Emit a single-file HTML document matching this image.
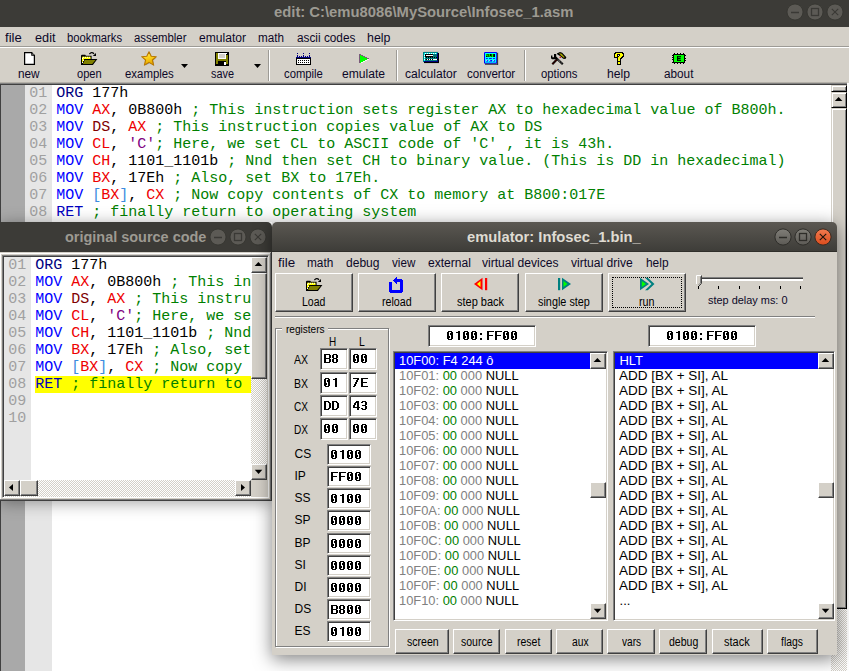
<!DOCTYPE html>
<html><head><meta charset="utf-8"><style>
html,body{margin:0;padding:0;}
body{width:849px;height:671px;overflow:hidden;position:relative;background:#fff;font-family:"Liberation Sans",sans-serif;}
.a{position:absolute;}
.t{position:absolute;white-space:pre;transform-origin:0 0;}
</style></head><body>
<div class="a" style="left:0px;top:0px;width:849px;height:27px;background:#3c3b37;"></div>
<div class="t" style="left:273.50px;top:4.75px;font-family:'Liberation Sans', sans-serif;font-size:14px;line-height:14px;color:#9d9a92;font-weight:bold;transform:scaleX(1.0574);">edit: C:\emu8086\MySource\Infosec_1.asm</div>
<svg class="a" style="left:785px;top:2px" width="20" height="20"><circle cx="10" cy="10" r="8" fill="#5c5a55" stroke="#34332f" stroke-width="0.8"/><line x1="6" y1="10.5" x2="14" y2="10.5" stroke="#3a3935" stroke-width="1.5"/></svg>
<svg class="a" style="left:805px;top:2px" width="20" height="20"><circle cx="10" cy="10" r="8" fill="#5c5a55" stroke="#34332f" stroke-width="0.8"/><rect x="6.5" y="6.5" width="7" height="7" fill="none" stroke="#3a3935" stroke-width="1.3"/></svg>
<svg class="a" style="left:825px;top:2px" width="20" height="20"><circle cx="10" cy="10" r="8" fill="#5c5a55" stroke="#34332f" stroke-width="0.8"/><path d="M6.8 6.8 L13.2 13.2 M13.2 6.8 L6.8 13.2" stroke="#3a3935" stroke-width="1.1"/></svg>
<div class="a" style="left:0px;top:27px;width:849px;height:19px;background:#d4d0c8;"></div>
<div class="a" style="left:0px;top:46px;width:849px;height:1px;background:#9d9b96;"></div>
<div class="a" style="left:0px;top:47px;width:849px;height:1px;background:#fff;"></div>
<div class="t" style="left:5.00px;top:31.84px;font-family:'Liberation Sans', sans-serif;font-size:12px;line-height:12px;color:#0c0828;transform:scaleX(1.0884);">file</div>
<div class="t" style="left:34.50px;top:31.84px;font-family:'Liberation Sans', sans-serif;font-size:12px;line-height:12px;color:#0c0828;transform:scaleX(1.0589);">edit</div>
<div class="t" style="left:67.40px;top:31.84px;font-family:'Liberation Sans', sans-serif;font-size:12px;line-height:12px;color:#0c0828;transform:scaleX(0.9372);">bookmarks</div>
<div class="t" style="left:134.30px;top:31.84px;font-family:'Liberation Sans', sans-serif;font-size:12px;line-height:12px;color:#0c0828;transform:scaleX(0.9483);">assembler</div>
<div class="t" style="left:199.00px;top:31.84px;font-family:'Liberation Sans', sans-serif;font-size:12px;line-height:12px;color:#0c0828;transform:scaleX(1.0067);">emulator</div>
<div class="t" style="left:258.30px;top:31.84px;font-family:'Liberation Sans', sans-serif;font-size:12px;line-height:12px;color:#0c0828;transform:scaleX(0.9742);">math</div>
<div class="t" style="left:297.00px;top:31.84px;font-family:'Liberation Sans', sans-serif;font-size:12px;line-height:12px;color:#0c0828;transform:scaleX(0.9836);">ascii codes</div>
<div class="t" style="left:367.00px;top:31.84px;font-family:'Liberation Sans', sans-serif;font-size:12px;line-height:12px;color:#0c0828;transform:scaleX(1.0314);">help</div>
<div class="a" style="left:0px;top:48px;width:849px;height:35px;background:#d4d0c8;"></div>
<div class="t" style="left:18.40px;top:67.54px;font-family:'Liberation Sans', sans-serif;font-size:12px;line-height:12px;color:#0c0828;transform:scaleX(0.9811);">new</div>
<div class="t" style="left:76.50px;top:67.54px;font-family:'Liberation Sans', sans-serif;font-size:12px;line-height:12px;color:#0c0828;transform:scaleX(0.9250);">open</div>
<div class="t" style="left:124.70px;top:67.54px;font-family:'Liberation Sans', sans-serif;font-size:12px;line-height:12px;color:#0c0828;transform:scaleX(0.9502);">examples</div>
<div class="t" style="left:210.60px;top:67.54px;font-family:'Liberation Sans', sans-serif;font-size:12px;line-height:12px;color:#0c0828;transform:scaleX(0.9070);">save</div>
<div class="t" style="left:283.50px;top:67.54px;font-family:'Liberation Sans', sans-serif;font-size:12px;line-height:12px;color:#0c0828;transform:scaleX(0.9405);">compile</div>
<div class="t" style="left:341.50px;top:67.54px;font-family:'Liberation Sans', sans-serif;font-size:12px;line-height:12px;color:#0c0828;transform:scaleX(1.0093);">emulate</div>
<div class="t" style="left:405.00px;top:67.54px;font-family:'Liberation Sans', sans-serif;font-size:12px;line-height:12px;color:#0c0828;transform:scaleX(1.0086);">calculator</div>
<div class="t" style="left:466.90px;top:67.54px;font-family:'Liberation Sans', sans-serif;font-size:12px;line-height:12px;color:#0c0828;transform:scaleX(0.9634);">convertor</div>
<div class="t" style="left:540.70px;top:67.54px;font-family:'Liberation Sans', sans-serif;font-size:12px;line-height:12px;color:#0c0828;transform:scaleX(0.9431);">options</div>
<div class="t" style="left:607.00px;top:67.54px;font-family:'Liberation Sans', sans-serif;font-size:12px;line-height:12px;color:#0c0828;transform:scaleX(1.0138);">help</div>
<div class="t" style="left:664.40px;top:67.54px;font-family:'Liberation Sans', sans-serif;font-size:12px;line-height:12px;color:#0c0828;transform:scaleX(0.9790);">about</div>
<div class="a" style="left:268px;top:50px;width:1px;height:31px;background:#9d9b96;"></div>
<div class="a" style="left:269px;top:50px;width:1px;height:31px;background:#fff;"></div>
<div class="a" style="left:396px;top:50px;width:1px;height:31px;background:#9d9b96;"></div>
<div class="a" style="left:397px;top:50px;width:1px;height:31px;background:#fff;"></div>
<div class="a" style="left:524px;top:50px;width:1px;height:31px;background:#9d9b96;"></div>
<div class="a" style="left:525px;top:50px;width:1px;height:31px;background:#fff;"></div>
<svg class="a" style="left:181px;top:64px;shape-rendering:auto" width="7" height="4" viewBox="0 0 7 4" shape-rendering="crispEdges"><polygon points="0,0 7,0 3.5,4" fill="#000"/></svg>
<svg class="a" style="left:254px;top:64px;shape-rendering:auto" width="7" height="4" viewBox="0 0 7 4" shape-rendering="crispEdges"><polygon points="0,0 7,0 3.5,4" fill="#000"/></svg>
<div class="a" style="left:0px;top:82px;width:847px;height:1px;background:#b4b0a8;"></div>
<div class="a" style="left:0px;top:83px;width:847px;height:1px;background:#808080;"></div>
<div class="a" style="left:0px;top:84px;width:847px;height:1px;background:#404040;"></div>
<div class="a" style="left:0px;top:85px;width:1px;height:586px;background:#404040;"></div>
<div class="a" style="left:1px;top:85px;width:24px;height:586px;background:#a9a9a9;"></div>
<div class="a" style="left:25px;top:85px;width:27px;height:586px;background:#e6e6e6;"></div>
<div class="a" style="left:831px;top:85px;width:15px;height:586px;background:#d4d0c8;"></div>
<div class="a" style="left:846px;top:84px;width:1px;height:587px;background:#404040;"></div>
<div class="a" style="left:847px;top:83px;width:2px;height:588px;background:#fff;"></div>
<div class="a" style="left:831px;top:85px;width:16px;height:7px;background:#d4d0c8;border-style:solid;border-width:1px;border-color:#d4d0c8 #000 #000 #d4d0c8;box-shadow:inset 1px 1px #fff, inset -1px -1px #808080;box-sizing:border-box;"></div>
<div class="a" style="left:831px;top:92px;width:16px;height:16px;background:#d4d0c8;border-style:solid;border-width:1px;border-color:#d4d0c8 #000 #000 #d4d0c8;box-shadow:inset 1px 1px #fff, inset -1px -1px #808080;box-sizing:border-box;"></div>
<svg class="a" style="left:831px;top:92px;shape-rendering:auto" width="16" height="16" viewBox="0 0 16 16" shape-rendering="crispEdges"><polygon points="3.8,9 11.4,9 7.6,5.1" fill="#000"/></svg>
<div class="a" style="left:831px;top:108px;width:16px;height:501px;background:#d4d0c8;border-style:solid;border-width:1px;border-color:#d4d0c8 #000 #000 #d4d0c8;box-shadow:inset 1px 1px #fff, inset -1px -1px #808080;box-sizing:border-box;"></div>
<div class="a" style="left:831px;top:609px;width:16px;height:62px;background-color:#fff;background-image:linear-gradient(45deg,#d4d0c8 25%,transparent 25%,transparent 75%,#d4d0c8 75%),linear-gradient(45deg,#d4d0c8 25%,transparent 25%,transparent 75%,#d4d0c8 75%);background-size:2px 2px;background-position:0 0,1px 1px;"></div>
<div class="t" style="left:29.30px;top:85.51px;font-family:'Liberation Mono', monospace;font-size:15px;line-height:15px;color:#a0a0a0;">01</div>
<div class="t" style="left:56.30px;top:85.51px;font-family:'Liberation Mono', monospace;font-size:15px;line-height:15px;color:#000080;">ORG</div>
<div class="t" style="left:92.30px;top:85.51px;font-family:'Liberation Mono', monospace;font-size:15px;line-height:15px;color:#000;">177h</div>
<div class="t" style="left:29.30px;top:102.51px;font-family:'Liberation Mono', monospace;font-size:15px;line-height:15px;color:#a0a0a0;">02</div>
<div class="t" style="left:56.30px;top:102.51px;font-family:'Liberation Mono', monospace;font-size:15px;line-height:15px;color:#0000ff;">MOV</div>
<div class="t" style="left:92.30px;top:102.51px;font-family:'Liberation Mono', monospace;font-size:15px;line-height:15px;color:#ee0000;">AX</div>
<div class="t" style="left:110.30px;top:102.51px;font-family:'Liberation Mono', monospace;font-size:15px;line-height:15px;color:#000;">, 0B800h </div>
<div class="t" style="left:191.30px;top:102.51px;font-family:'Liberation Mono', monospace;font-size:15px;line-height:15px;color:#008000;">; This instruction sets register AX to hexadecimal value of B800h.</div>
<div class="t" style="left:29.30px;top:119.51px;font-family:'Liberation Mono', monospace;font-size:15px;line-height:15px;color:#a0a0a0;">03</div>
<div class="t" style="left:56.30px;top:119.51px;font-family:'Liberation Mono', monospace;font-size:15px;line-height:15px;color:#0000ff;">MOV</div>
<div class="t" style="left:92.30px;top:119.51px;font-family:'Liberation Mono', monospace;font-size:15px;line-height:15px;color:#800000;">DS</div>
<div class="t" style="left:110.30px;top:119.51px;font-family:'Liberation Mono', monospace;font-size:15px;line-height:15px;color:#000;">, </div>
<div class="t" style="left:128.30px;top:119.51px;font-family:'Liberation Mono', monospace;font-size:15px;line-height:15px;color:#ee0000;">AX</div>
<div class="t" style="left:155.30px;top:119.51px;font-family:'Liberation Mono', monospace;font-size:15px;line-height:15px;color:#008000;">; This instruction copies value of AX to DS</div>
<div class="t" style="left:29.30px;top:136.51px;font-family:'Liberation Mono', monospace;font-size:15px;line-height:15px;color:#a0a0a0;">04</div>
<div class="t" style="left:56.30px;top:136.51px;font-family:'Liberation Mono', monospace;font-size:15px;line-height:15px;color:#0000ff;">MOV</div>
<div class="t" style="left:92.30px;top:136.51px;font-family:'Liberation Mono', monospace;font-size:15px;line-height:15px;color:#ee0000;">CL</div>
<div class="t" style="left:110.30px;top:136.51px;font-family:'Liberation Mono', monospace;font-size:15px;line-height:15px;color:#000;">, </div>
<div class="t" style="left:128.30px;top:136.51px;font-family:'Liberation Mono', monospace;font-size:15px;line-height:15px;color:#800080;">&#x27;C&#x27;</div>
<div class="t" style="left:155.30px;top:136.51px;font-family:'Liberation Mono', monospace;font-size:15px;line-height:15px;color:#008000;">; Here, we set CL to ASCII code of &#x27;C&#x27; , it is 43h.</div>
<div class="t" style="left:29.30px;top:153.51px;font-family:'Liberation Mono', monospace;font-size:15px;line-height:15px;color:#a0a0a0;">05</div>
<div class="t" style="left:56.30px;top:153.51px;font-family:'Liberation Mono', monospace;font-size:15px;line-height:15px;color:#0000ff;">MOV</div>
<div class="t" style="left:92.30px;top:153.51px;font-family:'Liberation Mono', monospace;font-size:15px;line-height:15px;color:#ee0000;">CH</div>
<div class="t" style="left:110.30px;top:153.51px;font-family:'Liberation Mono', monospace;font-size:15px;line-height:15px;color:#000;">, 1101_1101b </div>
<div class="t" style="left:227.30px;top:153.51px;font-family:'Liberation Mono', monospace;font-size:15px;line-height:15px;color:#008000;">; Nnd then set CH to binary value. (This is DD in hexadecimal)</div>
<div class="t" style="left:29.30px;top:170.51px;font-family:'Liberation Mono', monospace;font-size:15px;line-height:15px;color:#a0a0a0;">06</div>
<div class="t" style="left:56.30px;top:170.51px;font-family:'Liberation Mono', monospace;font-size:15px;line-height:15px;color:#0000ff;">MOV</div>
<div class="t" style="left:92.30px;top:170.51px;font-family:'Liberation Mono', monospace;font-size:15px;line-height:15px;color:#ee0000;">BX</div>
<div class="t" style="left:110.30px;top:170.51px;font-family:'Liberation Mono', monospace;font-size:15px;line-height:15px;color:#000;">, 17Eh </div>
<div class="t" style="left:173.30px;top:170.51px;font-family:'Liberation Mono', monospace;font-size:15px;line-height:15px;color:#008000;">; Also, set BX to 17Eh.</div>
<div class="t" style="left:29.30px;top:187.51px;font-family:'Liberation Mono', monospace;font-size:15px;line-height:15px;color:#a0a0a0;">07</div>
<div class="t" style="left:56.30px;top:187.51px;font-family:'Liberation Mono', monospace;font-size:15px;line-height:15px;color:#0000ff;">MOV</div>
<div class="t" style="left:92.30px;top:187.51px;font-family:'Liberation Mono', monospace;font-size:15px;line-height:15px;color:#3c8ce0;">[</div>
<div class="t" style="left:101.30px;top:187.51px;font-family:'Liberation Mono', monospace;font-size:15px;line-height:15px;color:#ee0000;">BX</div>
<div class="t" style="left:119.30px;top:187.51px;font-family:'Liberation Mono', monospace;font-size:15px;line-height:15px;color:#3c8ce0;">]</div>
<div class="t" style="left:128.30px;top:187.51px;font-family:'Liberation Mono', monospace;font-size:15px;line-height:15px;color:#000;">, </div>
<div class="t" style="left:146.30px;top:187.51px;font-family:'Liberation Mono', monospace;font-size:15px;line-height:15px;color:#ee0000;">CX</div>
<div class="t" style="left:173.30px;top:187.51px;font-family:'Liberation Mono', monospace;font-size:15px;line-height:15px;color:#008000;">; Now copy contents of CX to memory at B800:017E</div>
<div class="t" style="left:29.30px;top:204.51px;font-family:'Liberation Mono', monospace;font-size:15px;line-height:15px;color:#a0a0a0;">08</div>
<div class="t" style="left:56.30px;top:204.51px;font-family:'Liberation Mono', monospace;font-size:15px;line-height:15px;color:#0000c0;">RET</div>
<div class="t" style="left:92.30px;top:204.51px;font-family:'Liberation Mono', monospace;font-size:15px;line-height:15px;color:#008000;">; finally return to operating system</div>
<div class="a" style="left:0px;top:222px;width:272px;height:279px;box-shadow:0 2px 15px rgba(0,0,0,0.36);background:transparent;"></div>
<div class="a" style="left:0px;top:222px;width:272px;height:30px;background:#3c3b37;border-top-right-radius:5px;"></div>
<div class="t" style="left:64.60px;top:229.65px;font-family:'Liberation Sans', sans-serif;font-size:14px;line-height:14px;color:#9d9a92;font-weight:bold;transform:scaleX(1.0326);">original source code</div>
<svg class="a" style="left:208px;top:227px" width="20" height="20"><circle cx="10" cy="10" r="8" fill="#5c5a55" stroke="#34332f" stroke-width="0.8"/><line x1="6" y1="10.5" x2="14" y2="10.5" stroke="#3a3935" stroke-width="1.5"/></svg>
<svg class="a" style="left:228px;top:227px" width="20" height="20"><circle cx="10" cy="10" r="8" fill="#5c5a55" stroke="#34332f" stroke-width="0.8"/><rect x="6.5" y="6.5" width="7" height="7" fill="none" stroke="#3a3935" stroke-width="1.3"/></svg>
<svg class="a" style="left:248px;top:227px" width="20" height="20"><circle cx="10" cy="10" r="8" fill="#5c5a55" stroke="#34332f" stroke-width="0.8"/><path d="M6.8 6.8 L13.2 13.2 M13.2 6.8 L6.8 13.2" stroke="#3a3935" stroke-width="1.1"/></svg>
<div class="a" style="left:0px;top:252px;width:272px;height:249px;background:#d4d0c8;"></div>
<div class="a" style="left:0px;top:253px;width:270px;height:1px;background:#fff;"></div>
<div class="a" style="left:0px;top:253px;width:1px;height:246px;background:#fff;"></div>
<div class="a" style="left:0px;top:499px;width:271px;height:1px;background:#808080;"></div>
<div class="a" style="left:270px;top:253px;width:1px;height:247px;background:#808080;"></div>
<div class="a" style="left:0px;top:500px;width:272px;height:1px;background:#404040;"></div>
<div class="a" style="left:271px;top:252px;width:1px;height:249px;background:#404040;"></div>
<div class="a" style="left:2px;top:255px;width:267px;height:243px;background:#fff;border-style:solid;border-width:1px;border-color:#808080 #fff #fff #808080;box-shadow:inset 1px 1px #404040, inset -1px -1px #d4d0c8;box-sizing:border-box;"></div>
<div class="a" style="left:4px;top:257px;width:27px;height:223px;background:#e6e6e6;"></div>
<div class="t" style="left:8.30px;top:257.51px;font-family:'Liberation Mono', monospace;font-size:15px;line-height:15px;color:#a0a0a0;">01</div>
<div class="t" style="left:8.30px;top:274.51px;font-family:'Liberation Mono', monospace;font-size:15px;line-height:15px;color:#a0a0a0;">02</div>
<div class="t" style="left:8.30px;top:291.51px;font-family:'Liberation Mono', monospace;font-size:15px;line-height:15px;color:#a0a0a0;">03</div>
<div class="t" style="left:8.30px;top:308.51px;font-family:'Liberation Mono', monospace;font-size:15px;line-height:15px;color:#a0a0a0;">04</div>
<div class="t" style="left:8.30px;top:325.51px;font-family:'Liberation Mono', monospace;font-size:15px;line-height:15px;color:#a0a0a0;">05</div>
<div class="t" style="left:8.30px;top:342.51px;font-family:'Liberation Mono', monospace;font-size:15px;line-height:15px;color:#a0a0a0;">06</div>
<div class="t" style="left:8.30px;top:359.51px;font-family:'Liberation Mono', monospace;font-size:15px;line-height:15px;color:#a0a0a0;">07</div>
<div class="t" style="left:8.30px;top:376.51px;font-family:'Liberation Mono', monospace;font-size:15px;line-height:15px;color:#a0a0a0;">08</div>
<div class="t" style="left:8.30px;top:393.51px;font-family:'Liberation Mono', monospace;font-size:15px;line-height:15px;color:#a0a0a0;">09</div>
<div class="t" style="left:8.30px;top:410.51px;font-family:'Liberation Mono', monospace;font-size:15px;line-height:15px;color:#a0a0a0;">10</div>
<div class="a" style="left:35px;top:376px;width:216px;height:17px;background:#ffff00;"></div>
<div class="a" style="left:31px;top:257px;width:220px;height:223px;overflow:hidden">
<div class="t" style="left:4.30px;top:0.51px;font-family:'Liberation Mono', monospace;font-size:15px;line-height:15px;color:#000080;">ORG</div>
<div class="t" style="left:40.30px;top:0.51px;font-family:'Liberation Mono', monospace;font-size:15px;line-height:15px;color:#000;">177h</div>
<div class="t" style="left:4.30px;top:17.51px;font-family:'Liberation Mono', monospace;font-size:15px;line-height:15px;color:#0000ff;">MOV</div>
<div class="t" style="left:40.30px;top:17.51px;font-family:'Liberation Mono', monospace;font-size:15px;line-height:15px;color:#ee0000;">AX</div>
<div class="t" style="left:58.30px;top:17.51px;font-family:'Liberation Mono', monospace;font-size:15px;line-height:15px;color:#000;">, 0B800h </div>
<div class="t" style="left:139.30px;top:17.51px;font-family:'Liberation Mono', monospace;font-size:15px;line-height:15px;color:#008000;">; This instruction sets register AX to hexadecimal value of B800h.</div>
<div class="t" style="left:4.30px;top:34.51px;font-family:'Liberation Mono', monospace;font-size:15px;line-height:15px;color:#0000ff;">MOV</div>
<div class="t" style="left:40.30px;top:34.51px;font-family:'Liberation Mono', monospace;font-size:15px;line-height:15px;color:#800000;">DS</div>
<div class="t" style="left:58.30px;top:34.51px;font-family:'Liberation Mono', monospace;font-size:15px;line-height:15px;color:#000;">, </div>
<div class="t" style="left:76.30px;top:34.51px;font-family:'Liberation Mono', monospace;font-size:15px;line-height:15px;color:#ee0000;">AX</div>
<div class="t" style="left:103.30px;top:34.51px;font-family:'Liberation Mono', monospace;font-size:15px;line-height:15px;color:#008000;">; This instruction copies value of AX to DS</div>
<div class="t" style="left:4.30px;top:51.51px;font-family:'Liberation Mono', monospace;font-size:15px;line-height:15px;color:#0000ff;">MOV</div>
<div class="t" style="left:40.30px;top:51.51px;font-family:'Liberation Mono', monospace;font-size:15px;line-height:15px;color:#ee0000;">CL</div>
<div class="t" style="left:58.30px;top:51.51px;font-family:'Liberation Mono', monospace;font-size:15px;line-height:15px;color:#000;">, </div>
<div class="t" style="left:76.30px;top:51.51px;font-family:'Liberation Mono', monospace;font-size:15px;line-height:15px;color:#800080;">&#x27;C&#x27;</div>
<div class="t" style="left:103.30px;top:51.51px;font-family:'Liberation Mono', monospace;font-size:15px;line-height:15px;color:#008000;">; Here, we set CL to ASCII code of &#x27;C&#x27; , it is 43h.</div>
<div class="t" style="left:4.30px;top:68.51px;font-family:'Liberation Mono', monospace;font-size:15px;line-height:15px;color:#0000ff;">MOV</div>
<div class="t" style="left:40.30px;top:68.51px;font-family:'Liberation Mono', monospace;font-size:15px;line-height:15px;color:#ee0000;">CH</div>
<div class="t" style="left:58.30px;top:68.51px;font-family:'Liberation Mono', monospace;font-size:15px;line-height:15px;color:#000;">, 1101_1101b </div>
<div class="t" style="left:175.30px;top:68.51px;font-family:'Liberation Mono', monospace;font-size:15px;line-height:15px;color:#008000;">; Nnd then set CH to binary value. (This is DD in hexadecimal)</div>
<div class="t" style="left:4.30px;top:85.51px;font-family:'Liberation Mono', monospace;font-size:15px;line-height:15px;color:#0000ff;">MOV</div>
<div class="t" style="left:40.30px;top:85.51px;font-family:'Liberation Mono', monospace;font-size:15px;line-height:15px;color:#ee0000;">BX</div>
<div class="t" style="left:58.30px;top:85.51px;font-family:'Liberation Mono', monospace;font-size:15px;line-height:15px;color:#000;">, 17Eh </div>
<div class="t" style="left:121.30px;top:85.51px;font-family:'Liberation Mono', monospace;font-size:15px;line-height:15px;color:#008000;">; Also, set BX to 17Eh.</div>
<div class="t" style="left:4.30px;top:102.51px;font-family:'Liberation Mono', monospace;font-size:15px;line-height:15px;color:#0000ff;">MOV</div>
<div class="t" style="left:40.30px;top:102.51px;font-family:'Liberation Mono', monospace;font-size:15px;line-height:15px;color:#3c8ce0;">[</div>
<div class="t" style="left:49.30px;top:102.51px;font-family:'Liberation Mono', monospace;font-size:15px;line-height:15px;color:#ee0000;">BX</div>
<div class="t" style="left:67.30px;top:102.51px;font-family:'Liberation Mono', monospace;font-size:15px;line-height:15px;color:#3c8ce0;">]</div>
<div class="t" style="left:76.30px;top:102.51px;font-family:'Liberation Mono', monospace;font-size:15px;line-height:15px;color:#000;">, </div>
<div class="t" style="left:94.30px;top:102.51px;font-family:'Liberation Mono', monospace;font-size:15px;line-height:15px;color:#ee0000;">CX</div>
<div class="t" style="left:121.30px;top:102.51px;font-family:'Liberation Mono', monospace;font-size:15px;line-height:15px;color:#008000;">; Now copy contents of CX to memory at B800:017E</div>
<div class="t" style="left:4.30px;top:119.51px;font-family:'Liberation Mono', monospace;font-size:15px;line-height:15px;color:#0000c0;">RET</div>
<div class="t" style="left:40.30px;top:119.51px;font-family:'Liberation Mono', monospace;font-size:15px;line-height:15px;color:#008000;">; finally return to operating system</div>
</div>
<div class="a" style="left:251px;top:257px;width:16px;height:223px;background-color:#fff;background-image:linear-gradient(45deg,#d4d0c8 25%,transparent 25%,transparent 75%,#d4d0c8 75%),linear-gradient(45deg,#d4d0c8 25%,transparent 25%,transparent 75%,#d4d0c8 75%);background-size:2px 2px;background-position:0 0,1px 1px;"></div>
<div class="a" style="left:251px;top:257px;width:16px;height:16px;background:#d4d0c8;border-style:solid;border-width:1px;border-color:#fff #404040 #404040 #fff;box-shadow:inset -1px -1px #808080;box-sizing:border-box;"></div>
<svg class="a" style="left:251px;top:257px;shape-rendering:auto" width="16" height="16" viewBox="0 0 16 16" shape-rendering="crispEdges"><polygon points="3.6,9 11.2,9 7.4,5" fill="#000"/></svg>
<div class="a" style="left:251px;top:273px;width:16px;height:106px;background:#d4d0c8;border-style:solid;border-width:1px;border-color:#fff #404040 #404040 #fff;box-shadow:inset -1px -1px #808080;box-sizing:border-box;"></div>
<div class="a" style="left:251px;top:464px;width:16px;height:16px;background:#d4d0c8;border-style:solid;border-width:1px;border-color:#fff #404040 #404040 #fff;box-shadow:inset -1px -1px #808080;box-sizing:border-box;"></div>
<svg class="a" style="left:251px;top:464px;shape-rendering:auto" width="16" height="16" viewBox="0 0 16 16" shape-rendering="crispEdges"><polygon points="3.8,5.8 11.3,5.8 7.55,9.9" fill="#000"/></svg>
<div class="a" style="left:4px;top:480px;width:247px;height:17px;background-color:#fff;background-image:linear-gradient(45deg,#d4d0c8 25%,transparent 25%,transparent 75%,#d4d0c8 75%),linear-gradient(45deg,#d4d0c8 25%,transparent 25%,transparent 75%,#d4d0c8 75%);background-size:2px 2px;background-position:0 0,1px 1px;"></div>
<div class="a" style="left:4px;top:480px;width:16px;height:16px;background:#d4d0c8;border-style:solid;border-width:1px;border-color:#fff #404040 #404040 #fff;box-shadow:inset -1px -1px #808080;box-sizing:border-box;"></div>
<svg class="a" style="left:4px;top:480px;shape-rendering:auto" width="16" height="16" viewBox="0 0 16 16" shape-rendering="crispEdges"><polygon points="9,4 9,11 5,7.5" fill="#000"/></svg>
<div class="a" style="left:20px;top:480px;width:18px;height:16px;background:#d4d0c8;border-style:solid;border-width:1px;border-color:#fff #404040 #404040 #fff;box-shadow:inset -1px -1px #808080;box-sizing:border-box;"></div>
<div class="a" style="left:235px;top:480px;width:16px;height:16px;background:#d4d0c8;border-style:solid;border-width:1px;border-color:#fff #404040 #404040 #fff;box-shadow:inset -1px -1px #808080;box-sizing:border-box;"></div>
<svg class="a" style="left:235px;top:480px;shape-rendering:auto" width="16" height="16" viewBox="0 0 16 16" shape-rendering="crispEdges"><polygon points="6,4 6,11 10,7.5" fill="#000"/></svg>
<div class="a" style="left:251px;top:480px;width:16px;height:17px;background:#d4d0c8;"></div>
<div class="a" style="left:272px;top:222px;width:565px;height:433px;box-shadow:0 4px 18px rgba(0,0,0,0.5);background:transparent;border-radius:5px 5px 0 0;"></div>
<div class="a" style="left:272px;top:222px;width:565px;height:30px;background:linear-gradient(#5b5852,#3d3c38);border-radius:5px 5px 0 0;"></div>
<div class="a" style="left:272px;top:251px;width:565px;height:1px;background:#2f2e2a;"></div>
<div class="t" style="left:467.40px;top:230.15px;font-family:'Liberation Sans', sans-serif;font-size:14px;line-height:14px;color:#dfdbd2;font-weight:bold;transform:scaleX(1.0537);">emulator: Infosec_1.bin_</div>
<svg class="a" style="left:773px;top:227px" width="20" height="20"><defs><linearGradient id="ag0" x1="0" y1="0" x2="0" y2="1"><stop offset="0" stop-color="#807e78"/><stop offset="1" stop-color="#5c5a55"/></linearGradient></defs><circle cx="10" cy="10" r="8.1" fill="url(#ag0)" stroke="#2e2d29" stroke-width="1"/><line x1="6" y1="10.5" x2="14" y2="10.5" stroke="#2e2d29" stroke-width="1.5"/></svg>
<svg class="a" style="left:793px;top:227px" width="20" height="20"><defs><linearGradient id="ag1" x1="0" y1="0" x2="0" y2="1"><stop offset="0" stop-color="#807e78"/><stop offset="1" stop-color="#5c5a55"/></linearGradient></defs><circle cx="10" cy="10" r="8.1" fill="url(#ag1)" stroke="#2e2d29" stroke-width="1"/><rect x="6.5" y="6.5" width="7" height="7" fill="none" stroke="#2e2d29" stroke-width="1.3"/></svg>
<svg class="a" style="left:813px;top:227px" width="20" height="20"><defs><linearGradient id="ag2" x1="0" y1="0" x2="0" y2="1"><stop offset="0" stop-color="#f27b50"/><stop offset="1" stop-color="#dc4c1c"/></linearGradient></defs><circle cx="10" cy="10" r="8.1" fill="url(#ag2)" stroke="#3a2a20" stroke-width="1"/><path d="M6.8 6.8 L13.2 13.2 M13.2 6.8 L6.8 13.2" stroke="#1e140e" stroke-width="1.1"/></svg>
<div class="a" style="left:272px;top:252px;width:565px;height:403px;background:#d4d0c8;"></div>
<div class="t" style="left:277.50px;top:256.54px;font-family:'Liberation Sans', sans-serif;font-size:12px;line-height:12px;color:#0c0828;transform:scaleX(1.1145);">file</div>
<div class="t" style="left:306.90px;top:256.54px;font-family:'Liberation Sans', sans-serif;font-size:12px;line-height:12px;color:#0c0828;transform:scaleX(0.9855);">math</div>
<div class="t" style="left:345.80px;top:256.54px;font-family:'Liberation Sans', sans-serif;font-size:12px;line-height:12px;color:#0c0828;transform:scaleX(1.0037);">debug</div>
<div class="t" style="left:391.90px;top:256.54px;font-family:'Liberation Sans', sans-serif;font-size:12px;line-height:12px;color:#0c0828;transform:scaleX(0.9702);">view</div>
<div class="t" style="left:427.80px;top:256.54px;font-family:'Liberation Sans', sans-serif;font-size:12px;line-height:12px;color:#0c0828;transform:scaleX(1.0070);">external</div>
<div class="t" style="left:482.40px;top:256.54px;font-family:'Liberation Sans', sans-serif;font-size:12px;line-height:12px;color:#0c0828;transform:scaleX(1.0075);">virtual devices</div>
<div class="t" style="left:571.00px;top:256.54px;font-family:'Liberation Sans', sans-serif;font-size:12px;line-height:12px;color:#0c0828;transform:scaleX(1.0072);">virtual drive</div>
<div class="t" style="left:645.50px;top:256.54px;font-family:'Liberation Sans', sans-serif;font-size:12px;line-height:12px;color:#0c0828;transform:scaleX(0.9917);">help</div>
<div class="a" style="left:275px;top:273px;width:78px;height:39px;background:#d4d0c8;border-style:solid;border-width:1px;border-color:#fff #404040 #404040 #fff;box-shadow:inset -1px -1px #808080;box-sizing:border-box;"></div>
<div class="t" style="left:302.20px;top:296.04px;font-family:'Liberation Sans', sans-serif;font-size:12px;line-height:12px;color:#000;transform:scaleX(0.8726);">Load</div>
<div class="a" style="left:358px;top:273px;width:78px;height:39px;background:#d4d0c8;border-style:solid;border-width:1px;border-color:#fff #404040 #404040 #fff;box-shadow:inset -1px -1px #808080;box-sizing:border-box;"></div>
<div class="t" style="left:382.00px;top:296.04px;font-family:'Liberation Sans', sans-serif;font-size:12px;line-height:12px;color:#000;transform:scaleX(0.8903);">reload</div>
<div class="a" style="left:441px;top:273px;width:78px;height:39px;background:#d4d0c8;border-style:solid;border-width:1px;border-color:#fff #404040 #404040 #fff;box-shadow:inset -1px -1px #808080;box-sizing:border-box;"></div>
<div class="t" style="left:457.20px;top:296.04px;font-family:'Liberation Sans', sans-serif;font-size:12px;line-height:12px;color:#000;transform:scaleX(0.9168);">step back</div>
<div class="a" style="left:525px;top:273px;width:78px;height:39px;background:#d4d0c8;border-style:solid;border-width:1px;border-color:#fff #404040 #404040 #fff;box-shadow:inset -1px -1px #808080;box-sizing:border-box;"></div>
<div class="t" style="left:538.20px;top:296.04px;font-family:'Liberation Sans', sans-serif;font-size:12px;line-height:12px;color:#000;transform:scaleX(0.9046);">single step</div>
<div class="a" style="left:608px;top:273px;width:78px;height:39px;background:#d4d0c8;border-style:solid;border-width:1px;border-color:#fff #404040 #404040 #fff;box-shadow:inset -1px -1px #808080;box-sizing:border-box;"></div>
<div class="t" style="left:639.30px;top:296.04px;font-family:'Liberation Sans', sans-serif;font-size:12px;line-height:12px;color:#000;transform:scaleX(0.8937);">run</div>
<div class="a" style="left:612px;top:277px;width:70px;height:31px;border:1px dotted #000;box-sizing:border-box;"></div>
<div class="a" style="left:275px;top:316px;width:540px;height:1px;background:#808080;"></div>
<div class="a" style="left:275px;top:317px;width:540px;height:1px;background:#fff;"></div>
<div class="a" style="left:698px;top:277px;width:105px;height:1px;background:#808080;"></div>
<div class="a" style="left:698px;top:278px;width:105px;height:1px;background:#404040;"></div>
<div class="a" style="left:698px;top:279px;width:105px;height:2px;background:#fff;"></div>
<svg class="a" style="left:696px;top:274.5px;shape-rendering:auto" width="7" height="12" viewBox="0 0 7 12" shape-rendering="crispEdges"><polygon points="0.5,0.5 5.5,0.5 5.5,8 3,11 0.5,8.5" fill="#d4d0c8"/>
<path d="M0.5 9 V0.5 H5" fill="none" stroke="#fff" stroke-width="1"/>
<path d="M5.5 0.5 V8.5 L2.5 11.5" fill="none" stroke="#404040" stroke-width="1"/>
<path d="M4.5 1.5 V8 L2.5 10" fill="none" stroke="#808080" stroke-width="1"/></svg>
<div class="a" style="left:698px;top:286px;width:1px;height:3px;background:#000;"></div>
<div class="a" style="left:718px;top:286px;width:1px;height:3px;background:#000;"></div>
<div class="a" style="left:739px;top:286px;width:1px;height:3px;background:#000;"></div>
<div class="a" style="left:759px;top:286px;width:1px;height:3px;background:#000;"></div>
<div class="a" style="left:780px;top:286px;width:1px;height:3px;background:#000;"></div>
<div class="a" style="left:800px;top:286px;width:1px;height:3px;background:#000;"></div>
<div class="t" style="left:708.00px;top:295.06px;font-family:'Liberation Sans', sans-serif;font-size:11.5px;line-height:11.5px;color:#0c0828;transform:scaleX(0.9494);">step delay ms: 0</div>
<div class="a" style="left:275px;top:328px;width:114px;height:319px;border:1px solid #808080;box-shadow:inset 1px 1px #fff, 1px 1px #fff;box-sizing:border-box;"></div>
<div class="a" style="left:282px;top:322px;width:46px;height:12px;background:#d4d0c8;"></div>
<div class="t" style="left:286.30px;top:323.86px;font-family:'Liberation Sans', sans-serif;font-size:11.5px;line-height:11.5px;color:#000;transform:scaleX(0.8751);">registers</div>
<div class="t" style="left:329.00px;top:336.04px;font-family:'Liberation Sans', sans-serif;font-size:12px;line-height:12px;color:#000;transform:scaleX(0.8303);">H</div>
<div class="t" style="left:358.80px;top:336.04px;font-family:'Liberation Sans', sans-serif;font-size:12px;line-height:12px;color:#000;transform:scaleX(0.8673);">L</div>
<div class="t" style="left:294.00px;top:354.34px;font-family:'Liberation Sans', sans-serif;font-size:12px;line-height:12px;color:#000;transform:scaleX(0.8741);">AX</div>
<div class="a" style="left:320px;top:348px;width:28px;height:22px;background:#fff;border-style:solid;border-width:1px;border-color:#808080 #fff #fff #808080;box-shadow:inset 1px 1px #404040, inset -1px -1px #d4d0c8;box-sizing:border-box;"></div>
<div class="a" style="left:349px;top:348px;width:28px;height:22px;background:#fff;border-style:solid;border-width:1px;border-color:#808080 #fff #fff #808080;box-shadow:inset 1px 1px #404040, inset -1px -1px #d4d0c8;box-sizing:border-box;"></div>
<svg class="a" style="left:324px;top:354px" width="16" height="9" shape-rendering="crispEdges"><path d="M0 0h6v1h-6zM0 1h2v1h-2zM5 1h2v1h-2zM0 2h2v1h-2zM5 2h2v1h-2zM0 3h2v1h-2zM5 3h2v1h-2zM0 4h6v1h-6zM0 5h2v1h-2zM5 5h2v1h-2zM0 6h2v1h-2zM5 6h2v1h-2zM0 7h2v1h-2zM5 7h2v1h-2zM0 8h6v1h-6zM9 0h4v1h-4zM8 1h2v1h-2zM12 1h2v1h-2zM8 2h2v1h-2zM12 2h2v1h-2zM8 3h2v1h-2zM12 3h2v1h-2zM9 4h4v1h-4zM8 5h2v1h-2zM12 5h2v1h-2zM8 6h2v1h-2zM12 6h2v1h-2zM8 7h2v1h-2zM12 7h2v1h-2zM9 8h4v1h-4z" fill="#000"/></svg>
<svg class="a" style="left:353px;top:354px" width="16" height="9" shape-rendering="crispEdges"><path d="M1 0h4v1h-4zM0 1h2v1h-2zM4 1h2v1h-2zM0 2h2v1h-2zM3 2h3v1h-3zM0 3h2v1h-2zM3 3h3v1h-3zM0 4h2v1h-2zM4 4h2v1h-2zM0 5h3v1h-3zM4 5h2v1h-2zM0 6h3v1h-3zM4 6h2v1h-2zM0 7h2v1h-2zM4 7h2v1h-2zM1 8h4v1h-4zM9 0h4v1h-4zM8 1h2v1h-2zM12 1h2v1h-2zM8 2h2v1h-2zM11 2h3v1h-3zM8 3h2v1h-2zM11 3h3v1h-3zM8 4h2v1h-2zM12 4h2v1h-2zM8 5h3v1h-3zM12 5h2v1h-2zM8 6h3v1h-3zM12 6h2v1h-2zM8 7h2v1h-2zM12 7h2v1h-2zM9 8h4v1h-4z" fill="#000"/></svg>
<div class="t" style="left:294.00px;top:378.34px;font-family:'Liberation Sans', sans-serif;font-size:12px;line-height:12px;color:#000;transform:scaleX(0.8741);">BX</div>
<div class="a" style="left:320px;top:372px;width:28px;height:22px;background:#fff;border-style:solid;border-width:1px;border-color:#808080 #fff #fff #808080;box-shadow:inset 1px 1px #404040, inset -1px -1px #d4d0c8;box-sizing:border-box;"></div>
<div class="a" style="left:349px;top:372px;width:28px;height:22px;background:#fff;border-style:solid;border-width:1px;border-color:#808080 #fff #fff #808080;box-shadow:inset 1px 1px #404040, inset -1px -1px #d4d0c8;box-sizing:border-box;"></div>
<svg class="a" style="left:324px;top:378px" width="16" height="9" shape-rendering="crispEdges"><path d="M1 0h4v1h-4zM0 1h2v1h-2zM4 1h2v1h-2zM0 2h2v1h-2zM3 2h3v1h-3zM0 3h2v1h-2zM3 3h3v1h-3zM0 4h2v1h-2zM4 4h2v1h-2zM0 5h3v1h-3zM4 5h2v1h-2zM0 6h3v1h-3zM4 6h2v1h-2zM0 7h2v1h-2zM4 7h2v1h-2zM1 8h4v1h-4zM11 0h2v1h-2zM9 1h4v1h-4zM11 2h2v1h-2zM11 3h2v1h-2zM11 4h2v1h-2zM11 5h2v1h-2zM11 6h2v1h-2zM11 7h2v1h-2zM11 8h2v1h-2z" fill="#000"/></svg>
<svg class="a" style="left:353px;top:378px" width="16" height="9" shape-rendering="crispEdges"><path d="M0 0h6v1h-6zM4 1h2v1h-2zM3 2h2v1h-2zM3 3h2v1h-2zM2 4h2v1h-2zM2 5h2v1h-2zM1 6h2v1h-2zM1 7h2v1h-2zM0 8h2v1h-2zM8 0h7v1h-7zM8 1h2v1h-2zM8 2h2v1h-2zM8 3h2v1h-2zM8 4h6v1h-6zM8 5h2v1h-2zM8 6h2v1h-2zM8 7h2v1h-2zM8 8h7v1h-7z" fill="#000"/></svg>
<div class="t" style="left:294.00px;top:401.34px;font-family:'Liberation Sans', sans-serif;font-size:12px;line-height:12px;color:#000;transform:scaleX(0.8397);">CX</div>
<div class="a" style="left:320px;top:395px;width:28px;height:22px;background:#fff;border-style:solid;border-width:1px;border-color:#808080 #fff #fff #808080;box-shadow:inset 1px 1px #404040, inset -1px -1px #d4d0c8;box-sizing:border-box;"></div>
<div class="a" style="left:349px;top:395px;width:28px;height:22px;background:#fff;border-style:solid;border-width:1px;border-color:#808080 #fff #fff #808080;box-shadow:inset 1px 1px #404040, inset -1px -1px #d4d0c8;box-sizing:border-box;"></div>
<svg class="a" style="left:324px;top:401px" width="16" height="9" shape-rendering="crispEdges"><path d="M0 0h5v1h-5zM0 1h2v1h-2zM4 1h2v1h-2zM0 2h2v1h-2zM5 2h2v1h-2zM0 3h2v1h-2zM5 3h2v1h-2zM0 4h2v1h-2zM5 4h2v1h-2zM0 5h2v1h-2zM5 5h2v1h-2zM0 6h2v1h-2zM5 6h2v1h-2zM0 7h2v1h-2zM4 7h2v1h-2zM0 8h5v1h-5zM8 0h5v1h-5zM8 1h2v1h-2zM12 1h2v1h-2zM8 2h2v1h-2zM13 2h2v1h-2zM8 3h2v1h-2zM13 3h2v1h-2zM8 4h2v1h-2zM13 4h2v1h-2zM8 5h2v1h-2zM13 5h2v1h-2zM8 6h2v1h-2zM13 6h2v1h-2zM8 7h2v1h-2zM12 7h2v1h-2zM8 8h5v1h-5z" fill="#000"/></svg>
<svg class="a" style="left:353px;top:401px" width="16" height="9" shape-rendering="crispEdges"><path d="M3 0h3v1h-3zM2 1h4v1h-4zM1 2h2v1h-2zM4 2h2v1h-2zM1 3h2v1h-2zM4 3h2v1h-2zM0 4h2v1h-2zM4 4h2v1h-2zM0 5h2v1h-2zM4 5h2v1h-2zM0 6h7v1h-7zM4 7h2v1h-2zM4 8h2v1h-2zM9 0h4v1h-4zM8 1h2v1h-2zM12 1h2v1h-2zM12 2h2v1h-2zM12 3h2v1h-2zM9 4h4v1h-4zM12 5h2v1h-2zM12 6h2v1h-2zM8 7h2v1h-2zM12 7h2v1h-2zM9 8h4v1h-4z" fill="#000"/></svg>
<div class="t" style="left:294.00px;top:424.34px;font-family:'Liberation Sans', sans-serif;font-size:12px;line-height:12px;color:#000;transform:scaleX(0.8397);">DX</div>
<div class="a" style="left:320px;top:418px;width:28px;height:22px;background:#fff;border-style:solid;border-width:1px;border-color:#808080 #fff #fff #808080;box-shadow:inset 1px 1px #404040, inset -1px -1px #d4d0c8;box-sizing:border-box;"></div>
<div class="a" style="left:349px;top:418px;width:28px;height:22px;background:#fff;border-style:solid;border-width:1px;border-color:#808080 #fff #fff #808080;box-shadow:inset 1px 1px #404040, inset -1px -1px #d4d0c8;box-sizing:border-box;"></div>
<svg class="a" style="left:324px;top:424px" width="16" height="9" shape-rendering="crispEdges"><path d="M1 0h4v1h-4zM0 1h2v1h-2zM4 1h2v1h-2zM0 2h2v1h-2zM3 2h3v1h-3zM0 3h2v1h-2zM3 3h3v1h-3zM0 4h2v1h-2zM4 4h2v1h-2zM0 5h3v1h-3zM4 5h2v1h-2zM0 6h3v1h-3zM4 6h2v1h-2zM0 7h2v1h-2zM4 7h2v1h-2zM1 8h4v1h-4zM9 0h4v1h-4zM8 1h2v1h-2zM12 1h2v1h-2zM8 2h2v1h-2zM11 2h3v1h-3zM8 3h2v1h-2zM11 3h3v1h-3zM8 4h2v1h-2zM12 4h2v1h-2zM8 5h3v1h-3zM12 5h2v1h-2zM8 6h3v1h-3zM12 6h2v1h-2zM8 7h2v1h-2zM12 7h2v1h-2zM9 8h4v1h-4z" fill="#000"/></svg>
<svg class="a" style="left:353px;top:424px" width="16" height="9" shape-rendering="crispEdges"><path d="M1 0h4v1h-4zM0 1h2v1h-2zM4 1h2v1h-2zM0 2h2v1h-2zM3 2h3v1h-3zM0 3h2v1h-2zM3 3h3v1h-3zM0 4h2v1h-2zM4 4h2v1h-2zM0 5h3v1h-3zM4 5h2v1h-2zM0 6h3v1h-3zM4 6h2v1h-2zM0 7h2v1h-2zM4 7h2v1h-2zM1 8h4v1h-4zM9 0h4v1h-4zM8 1h2v1h-2zM12 1h2v1h-2zM8 2h2v1h-2zM11 2h3v1h-3zM8 3h2v1h-2zM11 3h3v1h-3zM8 4h2v1h-2zM12 4h2v1h-2zM8 5h3v1h-3zM12 5h2v1h-2zM8 6h3v1h-3zM12 6h2v1h-2zM8 7h2v1h-2zM12 7h2v1h-2zM9 8h4v1h-4z" fill="#000"/></svg>
<div class="t" style="left:294.50px;top:448.44px;font-family:'Liberation Sans', sans-serif;font-size:12px;line-height:12px;color:#000;">CS</div>
<div class="a" style="left:327px;top:444px;width:44px;height:21px;background:#fff;border-style:solid;border-width:1px;border-color:#808080 #fff #fff #808080;box-shadow:inset 1px 1px #404040, inset -1px -1px #d4d0c8;box-sizing:border-box;"></div>
<svg class="a" style="left:331px;top:450px" width="32" height="9" shape-rendering="crispEdges"><path d="M1 0h4v1h-4zM0 1h2v1h-2zM4 1h2v1h-2zM0 2h2v1h-2zM3 2h3v1h-3zM0 3h2v1h-2zM3 3h3v1h-3zM0 4h2v1h-2zM4 4h2v1h-2zM0 5h3v1h-3zM4 5h2v1h-2zM0 6h3v1h-3zM4 6h2v1h-2zM0 7h2v1h-2zM4 7h2v1h-2zM1 8h4v1h-4zM11 0h2v1h-2zM9 1h4v1h-4zM11 2h2v1h-2zM11 3h2v1h-2zM11 4h2v1h-2zM11 5h2v1h-2zM11 6h2v1h-2zM11 7h2v1h-2zM11 8h2v1h-2zM17 0h4v1h-4zM16 1h2v1h-2zM20 1h2v1h-2zM16 2h2v1h-2zM19 2h3v1h-3zM16 3h2v1h-2zM19 3h3v1h-3zM16 4h2v1h-2zM20 4h2v1h-2zM16 5h3v1h-3zM20 5h2v1h-2zM16 6h3v1h-3zM20 6h2v1h-2zM16 7h2v1h-2zM20 7h2v1h-2zM17 8h4v1h-4zM25 0h4v1h-4zM24 1h2v1h-2zM28 1h2v1h-2zM24 2h2v1h-2zM27 2h3v1h-3zM24 3h2v1h-2zM27 3h3v1h-3zM24 4h2v1h-2zM28 4h2v1h-2zM24 5h3v1h-3zM28 5h2v1h-2zM24 6h3v1h-3zM28 6h2v1h-2zM24 7h2v1h-2zM28 7h2v1h-2zM25 8h4v1h-4z" fill="#000"/></svg>
<div class="t" style="left:294.50px;top:470.44px;font-family:'Liberation Sans', sans-serif;font-size:12px;line-height:12px;color:#000;">IP</div>
<div class="a" style="left:327px;top:466px;width:44px;height:21px;background:#fff;border-style:solid;border-width:1px;border-color:#808080 #fff #fff #808080;box-shadow:inset 1px 1px #404040, inset -1px -1px #d4d0c8;box-sizing:border-box;"></div>
<svg class="a" style="left:331px;top:472px" width="32" height="9" shape-rendering="crispEdges"><path d="M0 0h7v1h-7zM0 1h2v1h-2zM0 2h2v1h-2zM0 3h2v1h-2zM0 4h6v1h-6zM0 5h2v1h-2zM0 6h2v1h-2zM0 7h2v1h-2zM0 8h2v1h-2zM8 0h7v1h-7zM8 1h2v1h-2zM8 2h2v1h-2zM8 3h2v1h-2zM8 4h6v1h-6zM8 5h2v1h-2zM8 6h2v1h-2zM8 7h2v1h-2zM8 8h2v1h-2zM17 0h4v1h-4zM16 1h2v1h-2zM20 1h2v1h-2zM16 2h2v1h-2zM19 2h3v1h-3zM16 3h2v1h-2zM19 3h3v1h-3zM16 4h2v1h-2zM20 4h2v1h-2zM16 5h3v1h-3zM20 5h2v1h-2zM16 6h3v1h-3zM20 6h2v1h-2zM16 7h2v1h-2zM20 7h2v1h-2zM17 8h4v1h-4zM25 0h4v1h-4zM24 1h2v1h-2zM28 1h2v1h-2zM24 2h2v1h-2zM27 2h3v1h-3zM24 3h2v1h-2zM27 3h3v1h-3zM24 4h2v1h-2zM28 4h2v1h-2zM24 5h3v1h-3zM28 5h2v1h-2zM24 6h3v1h-3zM28 6h2v1h-2zM24 7h2v1h-2zM28 7h2v1h-2zM25 8h4v1h-4z" fill="#000"/></svg>
<div class="t" style="left:294.50px;top:492.44px;font-family:'Liberation Sans', sans-serif;font-size:12px;line-height:12px;color:#000;">SS</div>
<div class="a" style="left:327px;top:488px;width:44px;height:21px;background:#fff;border-style:solid;border-width:1px;border-color:#808080 #fff #fff #808080;box-shadow:inset 1px 1px #404040, inset -1px -1px #d4d0c8;box-sizing:border-box;"></div>
<svg class="a" style="left:331px;top:494px" width="32" height="9" shape-rendering="crispEdges"><path d="M1 0h4v1h-4zM0 1h2v1h-2zM4 1h2v1h-2zM0 2h2v1h-2zM3 2h3v1h-3zM0 3h2v1h-2zM3 3h3v1h-3zM0 4h2v1h-2zM4 4h2v1h-2zM0 5h3v1h-3zM4 5h2v1h-2zM0 6h3v1h-3zM4 6h2v1h-2zM0 7h2v1h-2zM4 7h2v1h-2zM1 8h4v1h-4zM11 0h2v1h-2zM9 1h4v1h-4zM11 2h2v1h-2zM11 3h2v1h-2zM11 4h2v1h-2zM11 5h2v1h-2zM11 6h2v1h-2zM11 7h2v1h-2zM11 8h2v1h-2zM17 0h4v1h-4zM16 1h2v1h-2zM20 1h2v1h-2zM16 2h2v1h-2zM19 2h3v1h-3zM16 3h2v1h-2zM19 3h3v1h-3zM16 4h2v1h-2zM20 4h2v1h-2zM16 5h3v1h-3zM20 5h2v1h-2zM16 6h3v1h-3zM20 6h2v1h-2zM16 7h2v1h-2zM20 7h2v1h-2zM17 8h4v1h-4zM25 0h4v1h-4zM24 1h2v1h-2zM28 1h2v1h-2zM24 2h2v1h-2zM27 2h3v1h-3zM24 3h2v1h-2zM27 3h3v1h-3zM24 4h2v1h-2zM28 4h2v1h-2zM24 5h3v1h-3zM28 5h2v1h-2zM24 6h3v1h-3zM28 6h2v1h-2zM24 7h2v1h-2zM28 7h2v1h-2zM25 8h4v1h-4z" fill="#000"/></svg>
<div class="t" style="left:294.50px;top:514.44px;font-family:'Liberation Sans', sans-serif;font-size:12px;line-height:12px;color:#000;">SP</div>
<div class="a" style="left:327px;top:510px;width:44px;height:21px;background:#fff;border-style:solid;border-width:1px;border-color:#808080 #fff #fff #808080;box-shadow:inset 1px 1px #404040, inset -1px -1px #d4d0c8;box-sizing:border-box;"></div>
<svg class="a" style="left:331px;top:516px" width="32" height="9" shape-rendering="crispEdges"><path d="M1 0h4v1h-4zM0 1h2v1h-2zM4 1h2v1h-2zM0 2h2v1h-2zM3 2h3v1h-3zM0 3h2v1h-2zM3 3h3v1h-3zM0 4h2v1h-2zM4 4h2v1h-2zM0 5h3v1h-3zM4 5h2v1h-2zM0 6h3v1h-3zM4 6h2v1h-2zM0 7h2v1h-2zM4 7h2v1h-2zM1 8h4v1h-4zM9 0h4v1h-4zM8 1h2v1h-2zM12 1h2v1h-2zM8 2h2v1h-2zM11 2h3v1h-3zM8 3h2v1h-2zM11 3h3v1h-3zM8 4h2v1h-2zM12 4h2v1h-2zM8 5h3v1h-3zM12 5h2v1h-2zM8 6h3v1h-3zM12 6h2v1h-2zM8 7h2v1h-2zM12 7h2v1h-2zM9 8h4v1h-4zM17 0h4v1h-4zM16 1h2v1h-2zM20 1h2v1h-2zM16 2h2v1h-2zM19 2h3v1h-3zM16 3h2v1h-2zM19 3h3v1h-3zM16 4h2v1h-2zM20 4h2v1h-2zM16 5h3v1h-3zM20 5h2v1h-2zM16 6h3v1h-3zM20 6h2v1h-2zM16 7h2v1h-2zM20 7h2v1h-2zM17 8h4v1h-4zM25 0h4v1h-4zM24 1h2v1h-2zM28 1h2v1h-2zM24 2h2v1h-2zM27 2h3v1h-3zM24 3h2v1h-2zM27 3h3v1h-3zM24 4h2v1h-2zM28 4h2v1h-2zM24 5h3v1h-3zM28 5h2v1h-2zM24 6h3v1h-3zM28 6h2v1h-2zM24 7h2v1h-2zM28 7h2v1h-2zM25 8h4v1h-4z" fill="#000"/></svg>
<div class="t" style="left:294.50px;top:537.44px;font-family:'Liberation Sans', sans-serif;font-size:12px;line-height:12px;color:#000;">BP</div>
<div class="a" style="left:327px;top:533px;width:44px;height:21px;background:#fff;border-style:solid;border-width:1px;border-color:#808080 #fff #fff #808080;box-shadow:inset 1px 1px #404040, inset -1px -1px #d4d0c8;box-sizing:border-box;"></div>
<svg class="a" style="left:331px;top:539px" width="32" height="9" shape-rendering="crispEdges"><path d="M1 0h4v1h-4zM0 1h2v1h-2zM4 1h2v1h-2zM0 2h2v1h-2zM3 2h3v1h-3zM0 3h2v1h-2zM3 3h3v1h-3zM0 4h2v1h-2zM4 4h2v1h-2zM0 5h3v1h-3zM4 5h2v1h-2zM0 6h3v1h-3zM4 6h2v1h-2zM0 7h2v1h-2zM4 7h2v1h-2zM1 8h4v1h-4zM9 0h4v1h-4zM8 1h2v1h-2zM12 1h2v1h-2zM8 2h2v1h-2zM11 2h3v1h-3zM8 3h2v1h-2zM11 3h3v1h-3zM8 4h2v1h-2zM12 4h2v1h-2zM8 5h3v1h-3zM12 5h2v1h-2zM8 6h3v1h-3zM12 6h2v1h-2zM8 7h2v1h-2zM12 7h2v1h-2zM9 8h4v1h-4zM17 0h4v1h-4zM16 1h2v1h-2zM20 1h2v1h-2zM16 2h2v1h-2zM19 2h3v1h-3zM16 3h2v1h-2zM19 3h3v1h-3zM16 4h2v1h-2zM20 4h2v1h-2zM16 5h3v1h-3zM20 5h2v1h-2zM16 6h3v1h-3zM20 6h2v1h-2zM16 7h2v1h-2zM20 7h2v1h-2zM17 8h4v1h-4zM25 0h4v1h-4zM24 1h2v1h-2zM28 1h2v1h-2zM24 2h2v1h-2zM27 2h3v1h-3zM24 3h2v1h-2zM27 3h3v1h-3zM24 4h2v1h-2zM28 4h2v1h-2zM24 5h3v1h-3zM28 5h2v1h-2zM24 6h3v1h-3zM28 6h2v1h-2zM24 7h2v1h-2zM28 7h2v1h-2zM25 8h4v1h-4z" fill="#000"/></svg>
<div class="t" style="left:294.50px;top:559.44px;font-family:'Liberation Sans', sans-serif;font-size:12px;line-height:12px;color:#000;">SI</div>
<div class="a" style="left:327px;top:555px;width:44px;height:21px;background:#fff;border-style:solid;border-width:1px;border-color:#808080 #fff #fff #808080;box-shadow:inset 1px 1px #404040, inset -1px -1px #d4d0c8;box-sizing:border-box;"></div>
<svg class="a" style="left:331px;top:561px" width="32" height="9" shape-rendering="crispEdges"><path d="M1 0h4v1h-4zM0 1h2v1h-2zM4 1h2v1h-2zM0 2h2v1h-2zM3 2h3v1h-3zM0 3h2v1h-2zM3 3h3v1h-3zM0 4h2v1h-2zM4 4h2v1h-2zM0 5h3v1h-3zM4 5h2v1h-2zM0 6h3v1h-3zM4 6h2v1h-2zM0 7h2v1h-2zM4 7h2v1h-2zM1 8h4v1h-4zM9 0h4v1h-4zM8 1h2v1h-2zM12 1h2v1h-2zM8 2h2v1h-2zM11 2h3v1h-3zM8 3h2v1h-2zM11 3h3v1h-3zM8 4h2v1h-2zM12 4h2v1h-2zM8 5h3v1h-3zM12 5h2v1h-2zM8 6h3v1h-3zM12 6h2v1h-2zM8 7h2v1h-2zM12 7h2v1h-2zM9 8h4v1h-4zM17 0h4v1h-4zM16 1h2v1h-2zM20 1h2v1h-2zM16 2h2v1h-2zM19 2h3v1h-3zM16 3h2v1h-2zM19 3h3v1h-3zM16 4h2v1h-2zM20 4h2v1h-2zM16 5h3v1h-3zM20 5h2v1h-2zM16 6h3v1h-3zM20 6h2v1h-2zM16 7h2v1h-2zM20 7h2v1h-2zM17 8h4v1h-4zM25 0h4v1h-4zM24 1h2v1h-2zM28 1h2v1h-2zM24 2h2v1h-2zM27 2h3v1h-3zM24 3h2v1h-2zM27 3h3v1h-3zM24 4h2v1h-2zM28 4h2v1h-2zM24 5h3v1h-3zM28 5h2v1h-2zM24 6h3v1h-3zM28 6h2v1h-2zM24 7h2v1h-2zM28 7h2v1h-2zM25 8h4v1h-4z" fill="#000"/></svg>
<div class="t" style="left:294.50px;top:581.44px;font-family:'Liberation Sans', sans-serif;font-size:12px;line-height:12px;color:#000;">DI</div>
<div class="a" style="left:327px;top:577px;width:44px;height:21px;background:#fff;border-style:solid;border-width:1px;border-color:#808080 #fff #fff #808080;box-shadow:inset 1px 1px #404040, inset -1px -1px #d4d0c8;box-sizing:border-box;"></div>
<svg class="a" style="left:331px;top:583px" width="32" height="9" shape-rendering="crispEdges"><path d="M1 0h4v1h-4zM0 1h2v1h-2zM4 1h2v1h-2zM0 2h2v1h-2zM3 2h3v1h-3zM0 3h2v1h-2zM3 3h3v1h-3zM0 4h2v1h-2zM4 4h2v1h-2zM0 5h3v1h-3zM4 5h2v1h-2zM0 6h3v1h-3zM4 6h2v1h-2zM0 7h2v1h-2zM4 7h2v1h-2zM1 8h4v1h-4zM9 0h4v1h-4zM8 1h2v1h-2zM12 1h2v1h-2zM8 2h2v1h-2zM11 2h3v1h-3zM8 3h2v1h-2zM11 3h3v1h-3zM8 4h2v1h-2zM12 4h2v1h-2zM8 5h3v1h-3zM12 5h2v1h-2zM8 6h3v1h-3zM12 6h2v1h-2zM8 7h2v1h-2zM12 7h2v1h-2zM9 8h4v1h-4zM17 0h4v1h-4zM16 1h2v1h-2zM20 1h2v1h-2zM16 2h2v1h-2zM19 2h3v1h-3zM16 3h2v1h-2zM19 3h3v1h-3zM16 4h2v1h-2zM20 4h2v1h-2zM16 5h3v1h-3zM20 5h2v1h-2zM16 6h3v1h-3zM20 6h2v1h-2zM16 7h2v1h-2zM20 7h2v1h-2zM17 8h4v1h-4zM25 0h4v1h-4zM24 1h2v1h-2zM28 1h2v1h-2zM24 2h2v1h-2zM27 2h3v1h-3zM24 3h2v1h-2zM27 3h3v1h-3zM24 4h2v1h-2zM28 4h2v1h-2zM24 5h3v1h-3zM28 5h2v1h-2zM24 6h3v1h-3zM28 6h2v1h-2zM24 7h2v1h-2zM28 7h2v1h-2zM25 8h4v1h-4z" fill="#000"/></svg>
<div class="t" style="left:294.50px;top:603.44px;font-family:'Liberation Sans', sans-serif;font-size:12px;line-height:12px;color:#000;">DS</div>
<div class="a" style="left:327px;top:599px;width:44px;height:21px;background:#fff;border-style:solid;border-width:1px;border-color:#808080 #fff #fff #808080;box-shadow:inset 1px 1px #404040, inset -1px -1px #d4d0c8;box-sizing:border-box;"></div>
<svg class="a" style="left:331px;top:605px" width="32" height="9" shape-rendering="crispEdges"><path d="M0 0h6v1h-6zM0 1h2v1h-2zM5 1h2v1h-2zM0 2h2v1h-2zM5 2h2v1h-2zM0 3h2v1h-2zM5 3h2v1h-2zM0 4h6v1h-6zM0 5h2v1h-2zM5 5h2v1h-2zM0 6h2v1h-2zM5 6h2v1h-2zM0 7h2v1h-2zM5 7h2v1h-2zM0 8h6v1h-6zM9 0h4v1h-4zM8 1h2v1h-2zM12 1h2v1h-2zM8 2h2v1h-2zM12 2h2v1h-2zM8 3h2v1h-2zM12 3h2v1h-2zM9 4h4v1h-4zM8 5h2v1h-2zM12 5h2v1h-2zM8 6h2v1h-2zM12 6h2v1h-2zM8 7h2v1h-2zM12 7h2v1h-2zM9 8h4v1h-4zM17 0h4v1h-4zM16 1h2v1h-2zM20 1h2v1h-2zM16 2h2v1h-2zM19 2h3v1h-3zM16 3h2v1h-2zM19 3h3v1h-3zM16 4h2v1h-2zM20 4h2v1h-2zM16 5h3v1h-3zM20 5h2v1h-2zM16 6h3v1h-3zM20 6h2v1h-2zM16 7h2v1h-2zM20 7h2v1h-2zM17 8h4v1h-4zM25 0h4v1h-4zM24 1h2v1h-2zM28 1h2v1h-2zM24 2h2v1h-2zM27 2h3v1h-3zM24 3h2v1h-2zM27 3h3v1h-3zM24 4h2v1h-2zM28 4h2v1h-2zM24 5h3v1h-3zM28 5h2v1h-2zM24 6h3v1h-3zM28 6h2v1h-2zM24 7h2v1h-2zM28 7h2v1h-2zM25 8h4v1h-4z" fill="#000"/></svg>
<div class="t" style="left:294.50px;top:625.44px;font-family:'Liberation Sans', sans-serif;font-size:12px;line-height:12px;color:#000;">ES</div>
<div class="a" style="left:327px;top:621px;width:44px;height:21px;background:#fff;border-style:solid;border-width:1px;border-color:#808080 #fff #fff #808080;box-shadow:inset 1px 1px #404040, inset -1px -1px #d4d0c8;box-sizing:border-box;"></div>
<svg class="a" style="left:331px;top:627px" width="32" height="9" shape-rendering="crispEdges"><path d="M1 0h4v1h-4zM0 1h2v1h-2zM4 1h2v1h-2zM0 2h2v1h-2zM3 2h3v1h-3zM0 3h2v1h-2zM3 3h3v1h-3zM0 4h2v1h-2zM4 4h2v1h-2zM0 5h3v1h-3zM4 5h2v1h-2zM0 6h3v1h-3zM4 6h2v1h-2zM0 7h2v1h-2zM4 7h2v1h-2zM1 8h4v1h-4zM11 0h2v1h-2zM9 1h4v1h-4zM11 2h2v1h-2zM11 3h2v1h-2zM11 4h2v1h-2zM11 5h2v1h-2zM11 6h2v1h-2zM11 7h2v1h-2zM11 8h2v1h-2zM17 0h4v1h-4zM16 1h2v1h-2zM20 1h2v1h-2zM16 2h2v1h-2zM19 2h3v1h-3zM16 3h2v1h-2zM19 3h3v1h-3zM16 4h2v1h-2zM20 4h2v1h-2zM16 5h3v1h-3zM20 5h2v1h-2zM16 6h3v1h-3zM20 6h2v1h-2zM16 7h2v1h-2zM20 7h2v1h-2zM17 8h4v1h-4zM25 0h4v1h-4zM24 1h2v1h-2zM28 1h2v1h-2zM24 2h2v1h-2zM27 2h3v1h-3zM24 3h2v1h-2zM27 3h3v1h-3zM24 4h2v1h-2zM28 4h2v1h-2zM24 5h3v1h-3zM28 5h2v1h-2zM24 6h3v1h-3zM28 6h2v1h-2zM24 7h2v1h-2zM28 7h2v1h-2zM25 8h4v1h-4z" fill="#000"/></svg>
<div class="a" style="left:428px;top:325px;width:108px;height:22px;background:#fff;border-style:solid;border-width:1px;border-color:#808080 #fff #fff #808080;box-shadow:inset 1px 1px #404040, inset -1px -1px #d4d0c8;box-sizing:border-box;"></div>
<svg class="a" style="left:447px;top:331px" width="72" height="9" shape-rendering="crispEdges"><path d="M1 0h4v1h-4zM0 1h2v1h-2zM4 1h2v1h-2zM0 2h2v1h-2zM3 2h3v1h-3zM0 3h2v1h-2zM3 3h3v1h-3zM0 4h2v1h-2zM4 4h2v1h-2zM0 5h3v1h-3zM4 5h2v1h-2zM0 6h3v1h-3zM4 6h2v1h-2zM0 7h2v1h-2zM4 7h2v1h-2zM1 8h4v1h-4zM11 0h2v1h-2zM9 1h4v1h-4zM11 2h2v1h-2zM11 3h2v1h-2zM11 4h2v1h-2zM11 5h2v1h-2zM11 6h2v1h-2zM11 7h2v1h-2zM11 8h2v1h-2zM17 0h4v1h-4zM16 1h2v1h-2zM20 1h2v1h-2zM16 2h2v1h-2zM19 2h3v1h-3zM16 3h2v1h-2zM19 3h3v1h-3zM16 4h2v1h-2zM20 4h2v1h-2zM16 5h3v1h-3zM20 5h2v1h-2zM16 6h3v1h-3zM20 6h2v1h-2zM16 7h2v1h-2zM20 7h2v1h-2zM17 8h4v1h-4zM25 0h4v1h-4zM24 1h2v1h-2zM28 1h2v1h-2zM24 2h2v1h-2zM27 2h3v1h-3zM24 3h2v1h-2zM27 3h3v1h-3zM24 4h2v1h-2zM28 4h2v1h-2zM24 5h3v1h-3zM28 5h2v1h-2zM24 6h3v1h-3zM28 6h2v1h-2zM24 7h2v1h-2zM28 7h2v1h-2zM25 8h4v1h-4zM33 2h2v1h-2zM33 3h2v1h-2zM33 7h2v1h-2zM33 8h2v1h-2zM40 0h7v1h-7zM40 1h2v1h-2zM40 2h2v1h-2zM40 3h2v1h-2zM40 4h6v1h-6zM40 5h2v1h-2zM40 6h2v1h-2zM40 7h2v1h-2zM40 8h2v1h-2zM48 0h7v1h-7zM48 1h2v1h-2zM48 2h2v1h-2zM48 3h2v1h-2zM48 4h6v1h-6zM48 5h2v1h-2zM48 6h2v1h-2zM48 7h2v1h-2zM48 8h2v1h-2zM57 0h4v1h-4zM56 1h2v1h-2zM60 1h2v1h-2zM56 2h2v1h-2zM59 2h3v1h-3zM56 3h2v1h-2zM59 3h3v1h-3zM56 4h2v1h-2zM60 4h2v1h-2zM56 5h3v1h-3zM60 5h2v1h-2zM56 6h3v1h-3zM60 6h2v1h-2zM56 7h2v1h-2zM60 7h2v1h-2zM57 8h4v1h-4zM65 0h4v1h-4zM64 1h2v1h-2zM68 1h2v1h-2zM64 2h2v1h-2zM67 2h3v1h-3zM64 3h2v1h-2zM67 3h3v1h-3zM64 4h2v1h-2zM68 4h2v1h-2zM64 5h3v1h-3zM68 5h2v1h-2zM64 6h3v1h-3zM68 6h2v1h-2zM64 7h2v1h-2zM68 7h2v1h-2zM65 8h4v1h-4z" fill="#000"/></svg>
<div class="a" style="left:648px;top:325px;width:108px;height:22px;background:#fff;border-style:solid;border-width:1px;border-color:#808080 #fff #fff #808080;box-shadow:inset 1px 1px #404040, inset -1px -1px #d4d0c8;box-sizing:border-box;"></div>
<svg class="a" style="left:667px;top:331px" width="72" height="9" shape-rendering="crispEdges"><path d="M1 0h4v1h-4zM0 1h2v1h-2zM4 1h2v1h-2zM0 2h2v1h-2zM3 2h3v1h-3zM0 3h2v1h-2zM3 3h3v1h-3zM0 4h2v1h-2zM4 4h2v1h-2zM0 5h3v1h-3zM4 5h2v1h-2zM0 6h3v1h-3zM4 6h2v1h-2zM0 7h2v1h-2zM4 7h2v1h-2zM1 8h4v1h-4zM11 0h2v1h-2zM9 1h4v1h-4zM11 2h2v1h-2zM11 3h2v1h-2zM11 4h2v1h-2zM11 5h2v1h-2zM11 6h2v1h-2zM11 7h2v1h-2zM11 8h2v1h-2zM17 0h4v1h-4zM16 1h2v1h-2zM20 1h2v1h-2zM16 2h2v1h-2zM19 2h3v1h-3zM16 3h2v1h-2zM19 3h3v1h-3zM16 4h2v1h-2zM20 4h2v1h-2zM16 5h3v1h-3zM20 5h2v1h-2zM16 6h3v1h-3zM20 6h2v1h-2zM16 7h2v1h-2zM20 7h2v1h-2zM17 8h4v1h-4zM25 0h4v1h-4zM24 1h2v1h-2zM28 1h2v1h-2zM24 2h2v1h-2zM27 2h3v1h-3zM24 3h2v1h-2zM27 3h3v1h-3zM24 4h2v1h-2zM28 4h2v1h-2zM24 5h3v1h-3zM28 5h2v1h-2zM24 6h3v1h-3zM28 6h2v1h-2zM24 7h2v1h-2zM28 7h2v1h-2zM25 8h4v1h-4zM33 2h2v1h-2zM33 3h2v1h-2zM33 7h2v1h-2zM33 8h2v1h-2zM40 0h7v1h-7zM40 1h2v1h-2zM40 2h2v1h-2zM40 3h2v1h-2zM40 4h6v1h-6zM40 5h2v1h-2zM40 6h2v1h-2zM40 7h2v1h-2zM40 8h2v1h-2zM48 0h7v1h-7zM48 1h2v1h-2zM48 2h2v1h-2zM48 3h2v1h-2zM48 4h6v1h-6zM48 5h2v1h-2zM48 6h2v1h-2zM48 7h2v1h-2zM48 8h2v1h-2zM57 0h4v1h-4zM56 1h2v1h-2zM60 1h2v1h-2zM56 2h2v1h-2zM59 2h3v1h-3zM56 3h2v1h-2zM59 3h3v1h-3zM56 4h2v1h-2zM60 4h2v1h-2zM56 5h3v1h-3zM60 5h2v1h-2zM56 6h3v1h-3zM60 6h2v1h-2zM56 7h2v1h-2zM60 7h2v1h-2zM57 8h4v1h-4zM65 0h4v1h-4zM64 1h2v1h-2zM68 1h2v1h-2zM64 2h2v1h-2zM67 2h3v1h-3zM64 3h2v1h-2zM67 3h3v1h-3zM64 4h2v1h-2zM68 4h2v1h-2zM64 5h3v1h-3zM68 5h2v1h-2zM64 6h3v1h-3zM68 6h2v1h-2zM64 7h2v1h-2zM68 7h2v1h-2zM65 8h4v1h-4z" fill="#000"/></svg>
<div class="a" style="left:393px;top:351px;width:215px;height:270px;background:#fff;border-style:solid;border-width:1px;border-color:#808080 #fff #fff #808080;box-shadow:inset 1px 1px #404040, inset -1px -1px #d4d0c8;box-sizing:border-box;"></div>
<div class="a" style="left:613px;top:351px;width:222px;height:270px;background:#fff;border-style:solid;border-width:1px;border-color:#808080 #fff #fff #808080;box-shadow:inset 1px 1px #404040, inset -1px -1px #d4d0c8;box-sizing:border-box;"></div>
<div class="a" style="left:395px;top:353px;width:195px;height:16px;background:#0000ff;"></div>
<div class="a" style="left:615px;top:353px;width:203px;height:16px;background:#0000ff;"></div>
<div class="t" style="left:399.20px;top:353.79px;font-family:'Liberation Sans', sans-serif;font-size:13px;line-height:13px;color:#fff;transform:scaleX(0.9905);">10F00: F4 244 ô</div>
<div class="t" style="left:619.40px;top:353.79px;font-family:'Liberation Sans', sans-serif;font-size:13px;line-height:13px;color:#fff;">HLT</div>
<div class="t" style="left:399.20px;top:368.79px;font-family:'Liberation Sans', sans-serif;font-size:13px;line-height:13px;color:#000;transform:scaleX(0.99);"><span style="color:#808080">10F01:</span> <span style="color:#008000">00</span> <span style="color:#808080">000</span> <span style="color:#000">NULL</span></div>
<div class="t" style="left:399.20px;top:383.79px;font-family:'Liberation Sans', sans-serif;font-size:13px;line-height:13px;color:#000;transform:scaleX(0.99);"><span style="color:#808080">10F02:</span> <span style="color:#008000">00</span> <span style="color:#808080">000</span> <span style="color:#000">NULL</span></div>
<div class="t" style="left:399.20px;top:398.79px;font-family:'Liberation Sans', sans-serif;font-size:13px;line-height:13px;color:#000;transform:scaleX(0.99);"><span style="color:#808080">10F03:</span> <span style="color:#008000">00</span> <span style="color:#808080">000</span> <span style="color:#000">NULL</span></div>
<div class="t" style="left:399.20px;top:413.79px;font-family:'Liberation Sans', sans-serif;font-size:13px;line-height:13px;color:#000;transform:scaleX(0.99);"><span style="color:#808080">10F04:</span> <span style="color:#008000">00</span> <span style="color:#808080">000</span> <span style="color:#000">NULL</span></div>
<div class="t" style="left:399.20px;top:428.79px;font-family:'Liberation Sans', sans-serif;font-size:13px;line-height:13px;color:#000;transform:scaleX(0.99);"><span style="color:#808080">10F05:</span> <span style="color:#008000">00</span> <span style="color:#808080">000</span> <span style="color:#000">NULL</span></div>
<div class="t" style="left:399.20px;top:443.79px;font-family:'Liberation Sans', sans-serif;font-size:13px;line-height:13px;color:#000;transform:scaleX(0.99);"><span style="color:#808080">10F06:</span> <span style="color:#008000">00</span> <span style="color:#808080">000</span> <span style="color:#000">NULL</span></div>
<div class="t" style="left:399.20px;top:458.79px;font-family:'Liberation Sans', sans-serif;font-size:13px;line-height:13px;color:#000;transform:scaleX(0.99);"><span style="color:#808080">10F07:</span> <span style="color:#008000">00</span> <span style="color:#808080">000</span> <span style="color:#000">NULL</span></div>
<div class="t" style="left:399.20px;top:473.79px;font-family:'Liberation Sans', sans-serif;font-size:13px;line-height:13px;color:#000;transform:scaleX(0.99);"><span style="color:#808080">10F08:</span> <span style="color:#008000">00</span> <span style="color:#808080">000</span> <span style="color:#000">NULL</span></div>
<div class="t" style="left:399.20px;top:488.79px;font-family:'Liberation Sans', sans-serif;font-size:13px;line-height:13px;color:#000;transform:scaleX(0.99);"><span style="color:#808080">10F09:</span> <span style="color:#008000">00</span> <span style="color:#808080">000</span> <span style="color:#000">NULL</span></div>
<div class="t" style="left:399.20px;top:503.79px;font-family:'Liberation Sans', sans-serif;font-size:13px;line-height:13px;color:#000;transform:scaleX(0.99);"><span style="color:#808080">10F0A:</span> <span style="color:#008000">00</span> <span style="color:#808080">000</span> <span style="color:#000">NULL</span></div>
<div class="t" style="left:399.20px;top:518.79px;font-family:'Liberation Sans', sans-serif;font-size:13px;line-height:13px;color:#000;transform:scaleX(0.99);"><span style="color:#808080">10F0B:</span> <span style="color:#008000">00</span> <span style="color:#808080">000</span> <span style="color:#000">NULL</span></div>
<div class="t" style="left:399.20px;top:533.79px;font-family:'Liberation Sans', sans-serif;font-size:13px;line-height:13px;color:#000;transform:scaleX(0.99);"><span style="color:#808080">10F0C:</span> <span style="color:#008000">00</span> <span style="color:#808080">000</span> <span style="color:#000">NULL</span></div>
<div class="t" style="left:399.20px;top:548.79px;font-family:'Liberation Sans', sans-serif;font-size:13px;line-height:13px;color:#000;transform:scaleX(0.99);"><span style="color:#808080">10F0D:</span> <span style="color:#008000">00</span> <span style="color:#808080">000</span> <span style="color:#000">NULL</span></div>
<div class="t" style="left:399.20px;top:563.79px;font-family:'Liberation Sans', sans-serif;font-size:13px;line-height:13px;color:#000;transform:scaleX(0.99);"><span style="color:#808080">10F0E:</span> <span style="color:#008000">00</span> <span style="color:#808080">000</span> <span style="color:#000">NULL</span></div>
<div class="t" style="left:399.20px;top:578.79px;font-family:'Liberation Sans', sans-serif;font-size:13px;line-height:13px;color:#000;transform:scaleX(0.99);"><span style="color:#808080">10F0F:</span> <span style="color:#008000">00</span> <span style="color:#808080">000</span> <span style="color:#000">NULL</span></div>
<div class="t" style="left:399.20px;top:593.79px;font-family:'Liberation Sans', sans-serif;font-size:13px;line-height:13px;color:#000;transform:scaleX(0.99);"><span style="color:#808080">10F10:</span> <span style="color:#008000">00</span> <span style="color:#808080">000</span> <span style="color:#000">NULL</span></div>
<div class="t" style="left:619.40px;top:368.79px;font-family:'Liberation Sans', sans-serif;font-size:13px;line-height:13px;color:#000;transform:scaleX(1.0377);">ADD [BX + SI], AL</div>
<div class="t" style="left:619.40px;top:383.79px;font-family:'Liberation Sans', sans-serif;font-size:13px;line-height:13px;color:#000;transform:scaleX(1.0377);">ADD [BX + SI], AL</div>
<div class="t" style="left:619.40px;top:398.79px;font-family:'Liberation Sans', sans-serif;font-size:13px;line-height:13px;color:#000;transform:scaleX(1.0377);">ADD [BX + SI], AL</div>
<div class="t" style="left:619.40px;top:413.79px;font-family:'Liberation Sans', sans-serif;font-size:13px;line-height:13px;color:#000;transform:scaleX(1.0377);">ADD [BX + SI], AL</div>
<div class="t" style="left:619.40px;top:428.79px;font-family:'Liberation Sans', sans-serif;font-size:13px;line-height:13px;color:#000;transform:scaleX(1.0377);">ADD [BX + SI], AL</div>
<div class="t" style="left:619.40px;top:443.79px;font-family:'Liberation Sans', sans-serif;font-size:13px;line-height:13px;color:#000;transform:scaleX(1.0377);">ADD [BX + SI], AL</div>
<div class="t" style="left:619.40px;top:458.79px;font-family:'Liberation Sans', sans-serif;font-size:13px;line-height:13px;color:#000;transform:scaleX(1.0377);">ADD [BX + SI], AL</div>
<div class="t" style="left:619.40px;top:473.79px;font-family:'Liberation Sans', sans-serif;font-size:13px;line-height:13px;color:#000;transform:scaleX(1.0377);">ADD [BX + SI], AL</div>
<div class="t" style="left:619.40px;top:488.79px;font-family:'Liberation Sans', sans-serif;font-size:13px;line-height:13px;color:#000;transform:scaleX(1.0377);">ADD [BX + SI], AL</div>
<div class="t" style="left:619.40px;top:503.79px;font-family:'Liberation Sans', sans-serif;font-size:13px;line-height:13px;color:#000;transform:scaleX(1.0377);">ADD [BX + SI], AL</div>
<div class="t" style="left:619.40px;top:518.79px;font-family:'Liberation Sans', sans-serif;font-size:13px;line-height:13px;color:#000;transform:scaleX(1.0377);">ADD [BX + SI], AL</div>
<div class="t" style="left:619.40px;top:533.79px;font-family:'Liberation Sans', sans-serif;font-size:13px;line-height:13px;color:#000;transform:scaleX(1.0377);">ADD [BX + SI], AL</div>
<div class="t" style="left:619.40px;top:548.79px;font-family:'Liberation Sans', sans-serif;font-size:13px;line-height:13px;color:#000;transform:scaleX(1.0377);">ADD [BX + SI], AL</div>
<div class="t" style="left:619.40px;top:563.79px;font-family:'Liberation Sans', sans-serif;font-size:13px;line-height:13px;color:#000;transform:scaleX(1.0377);">ADD [BX + SI], AL</div>
<div class="t" style="left:619.40px;top:578.79px;font-family:'Liberation Sans', sans-serif;font-size:13px;line-height:13px;color:#000;transform:scaleX(1.0377);">ADD [BX + SI], AL</div>
<div class="t" style="left:619.60px;top:593.79px;font-family:'Liberation Sans', sans-serif;font-size:13px;line-height:13px;color:#000;">...</div>
<div class="a" style="left:590px;top:353px;width:16px;height:16px;background:#d4d0c8;border-style:solid;border-width:1px;border-color:#fff #404040 #404040 #fff;box-shadow:inset -1px -1px #808080;box-sizing:border-box;"></div>
<svg class="a" style="left:590px;top:353px;shape-rendering:auto" width="16" height="16" viewBox="0 0 16 16" shape-rendering="crispEdges"><polygon points="3.6,9 11.2,9 7.4,5" fill="#000"/></svg>
<div class="a" style="left:590px;top:482px;width:16px;height:16px;background:#d4d0c8;border-style:solid;border-width:1px;border-color:#fff #404040 #404040 #fff;box-shadow:inset -1px -1px #808080;box-sizing:border-box;"></div>
<div class="a" style="left:590px;top:603px;width:16px;height:16px;background:#d4d0c8;border-style:solid;border-width:1px;border-color:#fff #404040 #404040 #fff;box-shadow:inset -1px -1px #808080;box-sizing:border-box;"></div>
<svg class="a" style="left:590px;top:603px;shape-rendering:auto" width="16" height="16" viewBox="0 0 16 16" shape-rendering="crispEdges"><polygon points="3.8,5.8 11.3,5.8 7.55,9.9" fill="#000"/></svg>
<div class="a" style="left:818px;top:353px;width:16px;height:16px;background:#d4d0c8;border-style:solid;border-width:1px;border-color:#fff #404040 #404040 #fff;box-shadow:inset -1px -1px #808080;box-sizing:border-box;"></div>
<svg class="a" style="left:818px;top:353px;shape-rendering:auto" width="16" height="16" viewBox="0 0 16 16" shape-rendering="crispEdges"><polygon points="3.6,9 11.2,9 7.4,5" fill="#000"/></svg>
<div class="a" style="left:818px;top:482px;width:16px;height:16px;background:#d4d0c8;border-style:solid;border-width:1px;border-color:#fff #404040 #404040 #fff;box-shadow:inset -1px -1px #808080;box-sizing:border-box;"></div>
<div class="a" style="left:818px;top:603px;width:16px;height:16px;background:#d4d0c8;border-style:solid;border-width:1px;border-color:#fff #404040 #404040 #fff;box-shadow:inset -1px -1px #808080;box-sizing:border-box;"></div>
<svg class="a" style="left:818px;top:603px;shape-rendering:auto" width="16" height="16" viewBox="0 0 16 16" shape-rendering="crispEdges"><polygon points="3.8,5.8 11.3,5.8 7.55,9.9" fill="#000"/></svg>
<div class="a" style="left:395px;top:629px;width:54px;height:25px;background:#d4d0c8;border-style:solid;border-width:1px;border-color:#fff #404040 #404040 #fff;box-shadow:inset -1px -1px #808080;box-sizing:border-box;"></div>
<div class="t" style="left:406.50px;top:635.64px;font-family:'Liberation Sans', sans-serif;font-size:12px;line-height:12px;color:#000;transform:scaleX(0.8798);">screen</div>
<div class="a" style="left:453px;top:629px;width:47px;height:25px;background:#d4d0c8;border-style:solid;border-width:1px;border-color:#fff #404040 #404040 #fff;box-shadow:inset -1px -1px #808080;box-sizing:border-box;"></div>
<div class="t" style="left:460.80px;top:635.64px;font-family:'Liberation Sans', sans-serif;font-size:12px;line-height:12px;color:#000;transform:scaleX(0.8742);">source</div>
<div class="a" style="left:505px;top:629px;width:47px;height:25px;background:#d4d0c8;border-style:solid;border-width:1px;border-color:#fff #404040 #404040 #fff;box-shadow:inset -1px -1px #808080;box-sizing:border-box;"></div>
<div class="t" style="left:517.00px;top:635.64px;font-family:'Liberation Sans', sans-serif;font-size:12px;line-height:12px;color:#000;transform:scaleX(0.8731);">reset</div>
<div class="a" style="left:556px;top:629px;width:47px;height:25px;background:#d4d0c8;border-style:solid;border-width:1px;border-color:#fff #404040 #404040 #fff;box-shadow:inset -1px -1px #808080;box-sizing:border-box;"></div>
<div class="t" style="left:572.00px;top:635.64px;font-family:'Liberation Sans', sans-serif;font-size:12px;line-height:12px;color:#000;transform:scaleX(0.8575);">aux</div>
<div class="a" style="left:607px;top:629px;width:48px;height:25px;background:#d4d0c8;border-style:solid;border-width:1px;border-color:#fff #404040 #404040 #fff;box-shadow:inset -1px -1px #808080;box-sizing:border-box;"></div>
<div class="t" style="left:621.90px;top:635.64px;font-family:'Liberation Sans', sans-serif;font-size:12px;line-height:12px;color:#000;transform:scaleX(0.8425);">vars</div>
<div class="a" style="left:659px;top:629px;width:48px;height:25px;background:#d4d0c8;border-style:solid;border-width:1px;border-color:#fff #404040 #404040 #fff;box-shadow:inset -1px -1px #808080;box-sizing:border-box;"></div>
<div class="t" style="left:668.80px;top:635.64px;font-family:'Liberation Sans', sans-serif;font-size:12px;line-height:12px;color:#000;transform:scaleX(0.8779);">debug</div>
<div class="a" style="left:712px;top:629px;width:51px;height:25px;background:#d4d0c8;border-style:solid;border-width:1px;border-color:#fff #404040 #404040 #fff;box-shadow:inset -1px -1px #808080;box-sizing:border-box;"></div>
<div class="t" style="left:724.40px;top:635.64px;font-family:'Liberation Sans', sans-serif;font-size:12px;line-height:12px;color:#000;transform:scaleX(0.9173);">stack</div>
<div class="a" style="left:767px;top:629px;width:51px;height:25px;background:#d4d0c8;border-style:solid;border-width:1px;border-color:#fff #404040 #404040 #fff;box-shadow:inset -1px -1px #808080;box-sizing:border-box;"></div>
<div class="t" style="left:781.30px;top:635.64px;font-family:'Liberation Sans', sans-serif;font-size:12px;line-height:12px;color:#000;transform:scaleX(0.8636);">flags</div>
<svg class="a" style="left:24px;top:52px;shape-rendering:auto" width="12" height="14" viewBox="0 0 12 14" shape-rendering="crispEdges"><path d="M0.6 0.6 H7.6 L10.4 3.4 V12.4 H0.6 Z" fill="#fff" stroke="#000" stroke-width="1.25"/><path d="M7.9 0.8 V3.1 H10.2" fill="none" stroke="#000" stroke-width="1.3"/><rect x="8.6" y="1.6" width="0.9" height="0.9" fill="#fff"/></svg>
<svg class="a" style="left:81px;top:52px;shape-rendering:auto" width="17" height="14" viewBox="0 0 17 14" shape-rendering="crispEdges">
<path d="M8.4 2.2 Q10.6 -0.6 13 1.8" fill="none" stroke="#000" stroke-width="1.3"/>
<polygon points="11.8,3.9 15,0.9 15,3.9" fill="#000"/>
<polygon points="0,3.6 0.8,2.8 4.2,2.8 5,3.8 10.6,3.8 10.6,7 16.4,7 11.9,13 0,13" fill="#000"/>
<polygon points="1,4.8 9.6,4.8 9.6,7 3.2,7 1,11.2" fill="#ffff00"/>
<rect x="2" y="4.8" width="1" height="1" fill="#fff"/><rect x="4" y="4.8" width="1" height="1" fill="#fff"/><rect x="6" y="4.8" width="1" height="1" fill="#fff"/><rect x="8" y="4.8" width="1" height="1" fill="#fff"/><rect x="1" y="6" width="1" height="1" fill="#fff"/><rect x="2" y="8" width="1" height="1" fill="#fff"/><rect x="1" y="10" width="1" height="1" fill="#fff"/>
<polygon points="3.8,8 14.5,8 11.2,12 1.8,12" fill="#808000"/>
</svg>
<svg class="a" style="left:141px;top:51px;shape-rendering:auto" width="17" height="16" viewBox="0 0 17 16" shape-rendering="crispEdges"><defs><linearGradient id="sg" x1="0" y1="0" x2="0.3" y2="1"><stop offset="0" stop-color="#fff6a0"/><stop offset="0.45" stop-color="#ffd820"/><stop offset="1" stop-color="#e8a800"/></linearGradient></defs>
<polygon points="8.8,1.8 10.9,6.1 15.6,6.5 12,9.6 13.2,14.6 8.8,12.1 4.4,14.6 5.6,9.6 2,6.5 6.7,6.1" fill="#50506a" opacity="0.55"/>
<polygon points="8,0.7 10.2,5.3 15.3,5.7 11.4,9 12.6,14.1 8,11.4 3.4,14.1 4.6,9 0.7,5.7 5.8,5.3" fill="url(#sg)" stroke="#b87800" stroke-width="1.1" stroke-linejoin="round"/></svg>
<svg class="a" style="left:215px;top:52px;" width="14" height="14" viewBox="0 0 14 14" shape-rendering="crispEdges"><rect x="0" y="0" width="14" height="14" fill="#000"/>
<rect x="1" y="1" width="2" height="11" fill="#808000"/><rect x="11" y="3" width="2" height="9" fill="#808000"/><rect x="1" y="7" width="12" height="2" fill="#808000"/>
<rect x="3" y="1" width="8" height="6" fill="#fff"/><rect x="4" y="2" width="6" height="4" fill="#d4d0c8"/>
<rect x="11" y="1" width="1" height="1" fill="#fff"/>
<rect x="3" y="9" width="8" height="4" fill="#000"/><rect x="9" y="10" width="2" height="3" fill="#fff"/></svg>
<svg class="a" style="left:295px;top:52px;" width="17" height="14" viewBox="0 0 17 14" shape-rendering="crispEdges">
<rect x="2" y="1" width="1" height="1" fill="#000080"/><rect x="8" y="1" width="1" height="1" fill="#000080"/><rect x="14" y="1" width="1" height="1" fill="#000080"/>
<rect x="2" y="3" width="1" height="2" fill="#000080"/><rect x="8" y="3" width="1" height="2" fill="#000080"/><rect x="14" y="3" width="1" height="2" fill="#000080"/>
<rect x="4" y="4" width="1" height="1" fill="#000080"/><rect x="6" y="4" width="1" height="1" fill="#000080"/><rect x="10" y="4" width="1" height="1" fill="#000080"/><rect x="12" y="4" width="1" height="1" fill="#000080"/>
<rect x="1" y="5" width="15" height="1" fill="#000080"/>
<rect x="1" y="6" width="15" height="7" fill="#000"/><rect x="2" y="7" width="13" height="5" fill="#fff"/>
<rect x="3" y="8" width="1" height="1" fill="#000"/><rect x="5" y="8" width="1" height="1" fill="#000"/><rect x="7" y="8" width="1" height="1" fill="#000"/><rect x="9" y="8" width="1" height="1" fill="#000"/><rect x="11" y="8" width="1" height="1" fill="#000"/><rect x="13" y="8" width="1" height="1" fill="#000"/>
<rect x="3" y="10" width="1" height="1" fill="#000"/><rect x="5" y="10" width="1" height="1" fill="#000"/><rect x="7" y="10" width="1" height="1" fill="#000"/><rect x="9" y="10" width="1" height="1" fill="#000"/><rect x="11" y="10" width="1" height="1" fill="#000"/><rect x="13" y="10" width="1" height="1" fill="#000"/>
</svg>
<svg class="a" style="left:359px;top:54px;" width="12" height="10" viewBox="0 0 12 10" shape-rendering="crispEdges"><rect x="0" y="0" width="2" height="1" fill="#00ff00"/><rect x="0" y="0" width="2" height="1" fill="#7a5a7a"/><rect x="0" y="1" width="4" height="1" fill="#00ff00"/><rect x="2" y="1" width="2" height="1" fill="#7a5a7a"/><rect x="0" y="2" width="6" height="1" fill="#00ff00"/><rect x="4" y="2" width="2" height="1" fill="#7a5a7a"/><rect x="0" y="3" width="8" height="1" fill="#00ff00"/><rect x="6" y="3" width="2" height="1" fill="#7a5a7a"/><rect x="0" y="4" width="10" height="1" fill="#00ff00"/><rect x="8" y="4" width="2" height="1" fill="#7a5a7a"/><rect x="0" y="5" width="8" height="1" fill="#00ff00"/><rect x="8" y="5" width="2" height="1" fill="#ffffff" fill-opacity="0.8"/><rect x="0" y="6" width="6" height="1" fill="#00ff00"/><rect x="6" y="6" width="2" height="1" fill="#ffffff" fill-opacity="0.8"/><rect x="0" y="7" width="4" height="1" fill="#00ff00"/><rect x="4" y="7" width="2" height="1" fill="#ffffff" fill-opacity="0.8"/><rect x="0" y="8" width="2" height="1" fill="#00ff00"/><rect x="2" y="8" width="2" height="1" fill="#ffffff" fill-opacity="0.8"/><rect x="0" y="0" width="1" height="9" fill="#7a5a7a"/></svg>
<svg class="a" style="left:423px;top:51px;" width="17" height="14" viewBox="0 0 17 14" shape-rendering="crispEdges"><rect x="0.5" y="0" width="15" height="13" fill="#c4c2bc"/><rect x="0" y="1" width="15" height="10" fill="#008080"/><rect x="1" y="9.5" width="14" height="1.5" fill="#000080"/><rect x="13.8" y="1.5" width="1.2" height="9.5" fill="#000080"/><rect x="15" y="1.8" width="1" height="10.2" fill="#000"/><rect x="1" y="11" width="15" height="1" fill="#000"/><rect x="1" y="2" width="1" height="1" fill="#00ffff"/><rect x="2" y="2" width="1" height="1" fill="#ffffff"/><rect x="3" y="2" width="1" height="1" fill="#00ffff"/><rect x="4" y="2" width="1" height="1" fill="#ffffff"/><rect x="5" y="2" width="1" height="1" fill="#00ffff"/><rect x="6" y="2" width="1" height="1" fill="#ffffff"/><rect x="7" y="2" width="1" height="1" fill="#00ffff"/><rect x="8" y="2" width="1" height="1" fill="#ffffff"/><rect x="9" y="2" width="1" height="1" fill="#00ffff"/><rect x="10" y="2" width="1" height="1" fill="#ffffff"/><rect x="11" y="2" width="1" height="1" fill="#00ffff"/><rect x="12" y="2" width="1" height="1" fill="#ffffff"/><rect x="13" y="2" width="1" height="1" fill="#00ffff"/><rect x="1" y="3" width="1" height="1" fill="#00ffff"/><rect x="1" y="4" width="1" height="1" fill="#ffffff"/><rect x="1" y="5" width="1" height="1" fill="#00ffff"/><rect x="1" y="6" width="1" height="1" fill="#ffffff"/><rect x="1" y="7" width="1" height="1" fill="#00ffff"/><rect x="1" y="8" width="1" height="1" fill="#ffffff"/><rect x="1" y="9" width="1" height="1" fill="#00ffff"/><rect x="2.2" y="3.2" width="7.8" height="2.6" fill="#000"/><rect x="3" y="4" width="6.5" height="1.2" fill="#fff"/><rect x="10.5" y="3.2" width="3" height="2.6" fill="#007070"/><rect x="3" y="6" width="1" height="1" fill="#000"/><rect x="5" y="6" width="1" height="1" fill="#000"/><rect x="7" y="6" width="1" height="1" fill="#000"/><rect x="9" y="6" width="1" height="1" fill="#000"/><rect x="11" y="6" width="1" height="1" fill="#000"/><rect x="13" y="6" width="1" height="1" fill="#000"/><rect x="3" y="8" width="8" height="1" fill="#fff"/><rect x="3" y="8" width="1" height="1" fill="#000"/><rect x="5" y="8" width="1" height="1" fill="#000"/><rect x="7" y="8" width="1" height="1" fill="#000"/><rect x="9" y="8" width="1" height="1" fill="#000"/><rect x="11" y="8" width="2.5" height="1" fill="#fff"/><rect x="13.5" y="8" width="1" height="1" fill="#000"/></svg>
<svg class="a" style="left:484px;top:52px;shape-rendering:auto" width="15" height="14" viewBox="0 0 15 14" shape-rendering="crispEdges"><rect x="0" y="0" width="13.2" height="11.7" rx="1.2" fill="#0000ff"/>
<rect x="13.2" y="0.8" width="0.9" height="11.9" fill="#202020"/><rect x="1" y="11.7" width="13.1" height="1" fill="#202020"/>
<rect x="1" y="1" width="11.2" height="9.7" fill="#00ffff"/>
<rect x="2" y="2" width="9" height="3" fill="#000"/>
<path d="M2.3 2 V3.6 H4 V2 M4 3.6 V5" fill="none" stroke="#00ff00" stroke-width="0.9"/>
<path d="M5.5 2 V4.5 H7" fill="none" stroke="#00ff00" stroke-width="0.9"/>
<rect x="7.6" y="2" width="1.6" height="3" fill="#00ff00"/>
<rect x="2" y="6.1" width="1.8" height="0.9" fill="#0000ff"/><rect x="5" y="6.1" width="2.8" height="0.9" fill="#0000ff"/><rect x="9" y="6.1" width="2" height="0.9" fill="#0000ff"/>
<rect x="2" y="8" width="2" height="1.5" fill="#0000ff"/><rect x="5" y="8" width="3" height="1.5" fill="#0000ff"/><rect x="9" y="8" width="2" height="1.5" fill="#0000ff"/>
<rect x="2.2" y="8.1" width="1" height="1" fill="#fff"/><rect x="5.2" y="8.1" width="1" height="1" fill="#fff"/><rect x="9.2" y="8.1" width="1" height="1" fill="#fff"/></svg>
<svg class="a" style="left:551px;top:52px;shape-rendering:auto" width="17" height="14" viewBox="0 0 17 14" shape-rendering="crispEdges">
<polygon points="0,3.6 1.4,3.6 1.4,5.2 3,5.2 3,2 5.2,2 5.2,4.6 6.8,6.2 6.2,7.2 1,7.2 0,6.2" fill="#000"/>
<polygon points="5.8,1.4 9,0 11.2,0.8 15.4,5.2 14.4,7 12.2,6.8 9.4,4.2 6.5,2.4" fill="#000"/>
<polygon points="8,1.1 10.6,1.7 13.8,5.3 12.6,5.8 9.8,3.4" fill="#9c9c00"/>
<path d="M1.3 12.2 L6.8 6.6" stroke="#000" stroke-width="2.1"/>
<path d="M1.8 11.7 L6.4 7" stroke="#b00000" stroke-width="0.8" stroke-dasharray="1 1"/>
<path d="M6.2 7 L11.8 12.2" stroke="#000" stroke-width="2.1"/>
<path d="M6.8 7.5 L11.3 11.7" stroke="#fff" stroke-width="0.8" stroke-dasharray="1 1"/>
<rect x="8.6" y="4.7" width="1.3" height="1.3" fill="#e00000"/></svg>
<svg class="a" style="left:613px;top:52px;" width="12" height="14" viewBox="0 0 12 14" shape-rendering="crispEdges"><rect x="1" y="1" width="1" height="1" fill="#000"/><rect x="1" y="2" width="1" height="1" fill="#000"/><rect x="1" y="3" width="1" height="1" fill="#000"/><rect x="1" y="4" width="1" height="1" fill="#000"/><rect x="1" y="5" width="1" height="1" fill="#000"/><rect x="2" y="0" width="1" height="1" fill="#000"/><rect x="2" y="1" width="1" height="1" fill="#000"/><rect x="2" y="5" width="1" height="1" fill="#000"/><rect x="3" y="0" width="1" height="1" fill="#000"/><rect x="3" y="5" width="1" height="1" fill="#000"/><rect x="4" y="0" width="1" height="1" fill="#000"/><rect x="4" y="2" width="1" height="1" fill="#000"/><rect x="4" y="3" width="1" height="1" fill="#000"/><rect x="4" y="4" width="1" height="1" fill="#000"/><rect x="4" y="5" width="1" height="1" fill="#000"/><rect x="4" y="6" width="1" height="1" fill="#000"/><rect x="4" y="7" width="1" height="1" fill="#000"/><rect x="4" y="8" width="1" height="1" fill="#000"/><rect x="4" y="9" width="1" height="1" fill="#000"/><rect x="4" y="10" width="1" height="1" fill="#000"/><rect x="4" y="11" width="1" height="1" fill="#000"/><rect x="4" y="12" width="1" height="1" fill="#000"/><rect x="5" y="0" width="1" height="1" fill="#000"/><rect x="5" y="2" width="1" height="1" fill="#000"/><rect x="5" y="3" width="1" height="1" fill="#000"/><rect x="5" y="4" width="1" height="1" fill="#000"/><rect x="5" y="9" width="1" height="1" fill="#000"/><rect x="5" y="12" width="1" height="1" fill="#000"/><rect x="6" y="0" width="1" height="1" fill="#000"/><rect x="6" y="2" width="1" height="1" fill="#000"/><rect x="6" y="3" width="1" height="1" fill="#000"/><rect x="6" y="9" width="1" height="1" fill="#000"/><rect x="6" y="12" width="1" height="1" fill="#000"/><rect x="7" y="0" width="1" height="1" fill="#000"/><rect x="7" y="6" width="1" height="1" fill="#000"/><rect x="7" y="7" width="1" height="1" fill="#000"/><rect x="7" y="8" width="1" height="1" fill="#000"/><rect x="7" y="9" width="1" height="1" fill="#000"/><rect x="7" y="10" width="1" height="1" fill="#000"/><rect x="7" y="11" width="1" height="1" fill="#000"/><rect x="7" y="12" width="1" height="1" fill="#000"/><rect x="8" y="0" width="1" height="1" fill="#000"/><rect x="8" y="5" width="1" height="1" fill="#000"/><rect x="8" y="6" width="1" height="1" fill="#000"/><rect x="9" y="0" width="1" height="1" fill="#000"/><rect x="9" y="1" width="1" height="1" fill="#000"/><rect x="9" y="4" width="1" height="1" fill="#000"/><rect x="9" y="5" width="1" height="1" fill="#000"/><rect x="10" y="1" width="1" height="1" fill="#000"/><rect x="10" y="2" width="1" height="1" fill="#000"/><rect x="10" y="3" width="1" height="1" fill="#000"/><rect x="10" y="4" width="1" height="1" fill="#000"/><rect x="2" y="2" width="1" height="1" fill="#ffff00"/><rect x="2" y="3" width="1" height="1" fill="#ffff00"/><rect x="2" y="4" width="1" height="1" fill="#ffff00"/><rect x="3" y="1" width="1" height="1" fill="#ffff00"/><rect x="3" y="2" width="1" height="1" fill="#ffff00"/><rect x="3" y="3" width="1" height="1" fill="#ffff00"/><rect x="3" y="4" width="1" height="1" fill="#ffff00"/><rect x="4" y="1" width="1" height="1" fill="#ffff00"/><rect x="5" y="1" width="1" height="1" fill="#ffff00"/><rect x="5" y="5" width="1" height="1" fill="#ffff00"/><rect x="5" y="6" width="1" height="1" fill="#ffff00"/><rect x="5" y="7" width="1" height="1" fill="#ffff00"/><rect x="5" y="8" width="1" height="1" fill="#ffff00"/><rect x="5" y="10" width="1" height="1" fill="#ffff00"/><rect x="5" y="11" width="1" height="1" fill="#ffff00"/><rect x="6" y="1" width="1" height="1" fill="#ffff00"/><rect x="6" y="4" width="1" height="1" fill="#ffff00"/><rect x="6" y="5" width="1" height="1" fill="#ffff00"/><rect x="6" y="6" width="1" height="1" fill="#ffff00"/><rect x="6" y="7" width="1" height="1" fill="#ffff00"/><rect x="6" y="8" width="1" height="1" fill="#ffff00"/><rect x="6" y="10" width="1" height="1" fill="#ffff00"/><rect x="6" y="11" width="1" height="1" fill="#ffff00"/><rect x="7" y="1" width="1" height="1" fill="#ffff00"/><rect x="7" y="2" width="1" height="1" fill="#ffff00"/><rect x="7" y="3" width="1" height="1" fill="#ffff00"/><rect x="7" y="4" width="1" height="1" fill="#ffff00"/><rect x="7" y="5" width="1" height="1" fill="#ffff00"/><rect x="8" y="1" width="1" height="1" fill="#ffff00"/><rect x="8" y="2" width="1" height="1" fill="#ffff00"/><rect x="8" y="3" width="1" height="1" fill="#ffff00"/><rect x="8" y="4" width="1" height="1" fill="#ffff00"/><rect x="9" y="2" width="1" height="1" fill="#ffff00"/><rect x="9" y="3" width="1" height="1" fill="#ffff00"/><rect x="5" y="3" width="1" height="1" fill="#e8e8e8"/></svg>
<svg class="a" style="left:672px;top:53px;shape-rendering:auto" width="15" height="12" viewBox="0 0 15 12" shape-rendering="crispEdges"><rect x="1" y="1" width="12" height="9" fill="#000"/><rect x="2" y="2" width="10" height="7" fill="#00ff00"/><rect x="2" y="0" width="1" height="1" fill="#000"/><rect x="2" y="10" width="1" height="1" fill="#000"/><rect x="5" y="0" width="1" height="1" fill="#000"/><rect x="5" y="10" width="1" height="1" fill="#000"/><rect x="8" y="0" width="1" height="1" fill="#000"/><rect x="8" y="10" width="1" height="1" fill="#000"/><rect x="11" y="0" width="1" height="1" fill="#000"/><rect x="11" y="10" width="1" height="1" fill="#000"/><rect x="0" y="2" width="1" height="1" fill="#000"/><rect x="0" y="4" width="1" height="1" fill="#000"/><rect x="0" y="6" width="1" height="1" fill="#000"/><rect x="0" y="9" width="1" height="1" fill="#000"/><rect x="13" y="2" width="1" height="1" fill="#000"/><rect x="13" y="5" width="1" height="1" fill="#000"/><rect x="13" y="7" width="1" height="1" fill="#000"/><rect x="5" y="3.2" width="4" height="1.1" fill="#000"/><rect x="5" y="3.2" width="1.1" height="4.7" fill="#000"/><rect x="5" y="5" width="3.6" height="1.1" fill="#000"/><rect x="5" y="6.8" width="4" height="1.1" fill="#000"/></svg>
<svg class="a" style="left:306px;top:278px;shape-rendering:auto" width="17" height="14" viewBox="0 0 17 14" shape-rendering="crispEdges">
<path d="M8.4 2.2 Q10.6 -0.6 13 1.8" fill="none" stroke="#000" stroke-width="1.3"/>
<polygon points="11.8,3.9 15,0.9 15,3.9" fill="#000"/>
<polygon points="0,3.6 0.8,2.8 4.2,2.8 5,3.8 10.6,3.8 10.6,7 16.4,7 11.9,13 0,13" fill="#000"/>
<polygon points="1,4.8 9.6,4.8 9.6,7 3.2,7 1,11.2" fill="#ffff00"/>
<rect x="2" y="4.8" width="1" height="1" fill="#fff"/><rect x="4" y="4.8" width="1" height="1" fill="#fff"/><rect x="6" y="4.8" width="1" height="1" fill="#fff"/><rect x="8" y="4.8" width="1" height="1" fill="#fff"/><rect x="1" y="6" width="1" height="1" fill="#fff"/><rect x="2" y="8" width="1" height="1" fill="#fff"/><rect x="1" y="10" width="1" height="1" fill="#fff"/>
<polygon points="3.8,8 14.5,8 11.2,12 1.8,12" fill="#808000"/>
</svg>
<svg class="a" style="left:388px;top:276px;" width="16" height="18" viewBox="0 0 16 18" shape-rendering="crispEdges"><path d="M1 6 H4 V14 H12 V6 H9 V3 H13.5 L15 4.5 V15.5 L13.5 17 H2.5 L1 15.5 Z" fill="#0000ff"/>
<polygon points="4.9,4.4 9,0.8 9,8.2" fill="#0000ff"/></svg>
<svg class="a" style="left:473px;top:277px;shape-rendering:auto" width="16" height="15" viewBox="0 0 16 15" shape-rendering="crispEdges"><polygon points="1,7 9.5,0.8 9.5,13.2" fill="#ff0000"/><polygon points="4,7 7.5,4 7.5,10" fill="#ffff00"/>
<rect x="12" y="1" width="2.2" height="12.2" fill="#ff0000"/></svg>
<svg class="a" style="left:557px;top:277px;shape-rendering:auto" width="16" height="15" viewBox="0 0 16 15" shape-rendering="crispEdges"><rect x="1" y="1" width="2.2" height="12.2" fill="#008080"/><polygon points="5,0.8 5,13.2 14,7" fill="#008080"/><polygon points="6.5,4 6.5,10 10.5,7" fill="#00ff00"/></svg>
<svg class="a" style="left:639px;top:277px;shape-rendering:auto" width="17" height="15" viewBox="0 0 17 15" shape-rendering="crispEdges"><polygon points="1,0.8 1,13.2 10,7" fill="#008080"/><polygon points="2.8,4 2.8,10 7,7" fill="#00ff00"/>
<polygon points="6,0.8 8.8,0.8 15.5,7 8.8,13.2 6,13.2 12.5,7" fill="#008080"/></svg>
</body></html>
